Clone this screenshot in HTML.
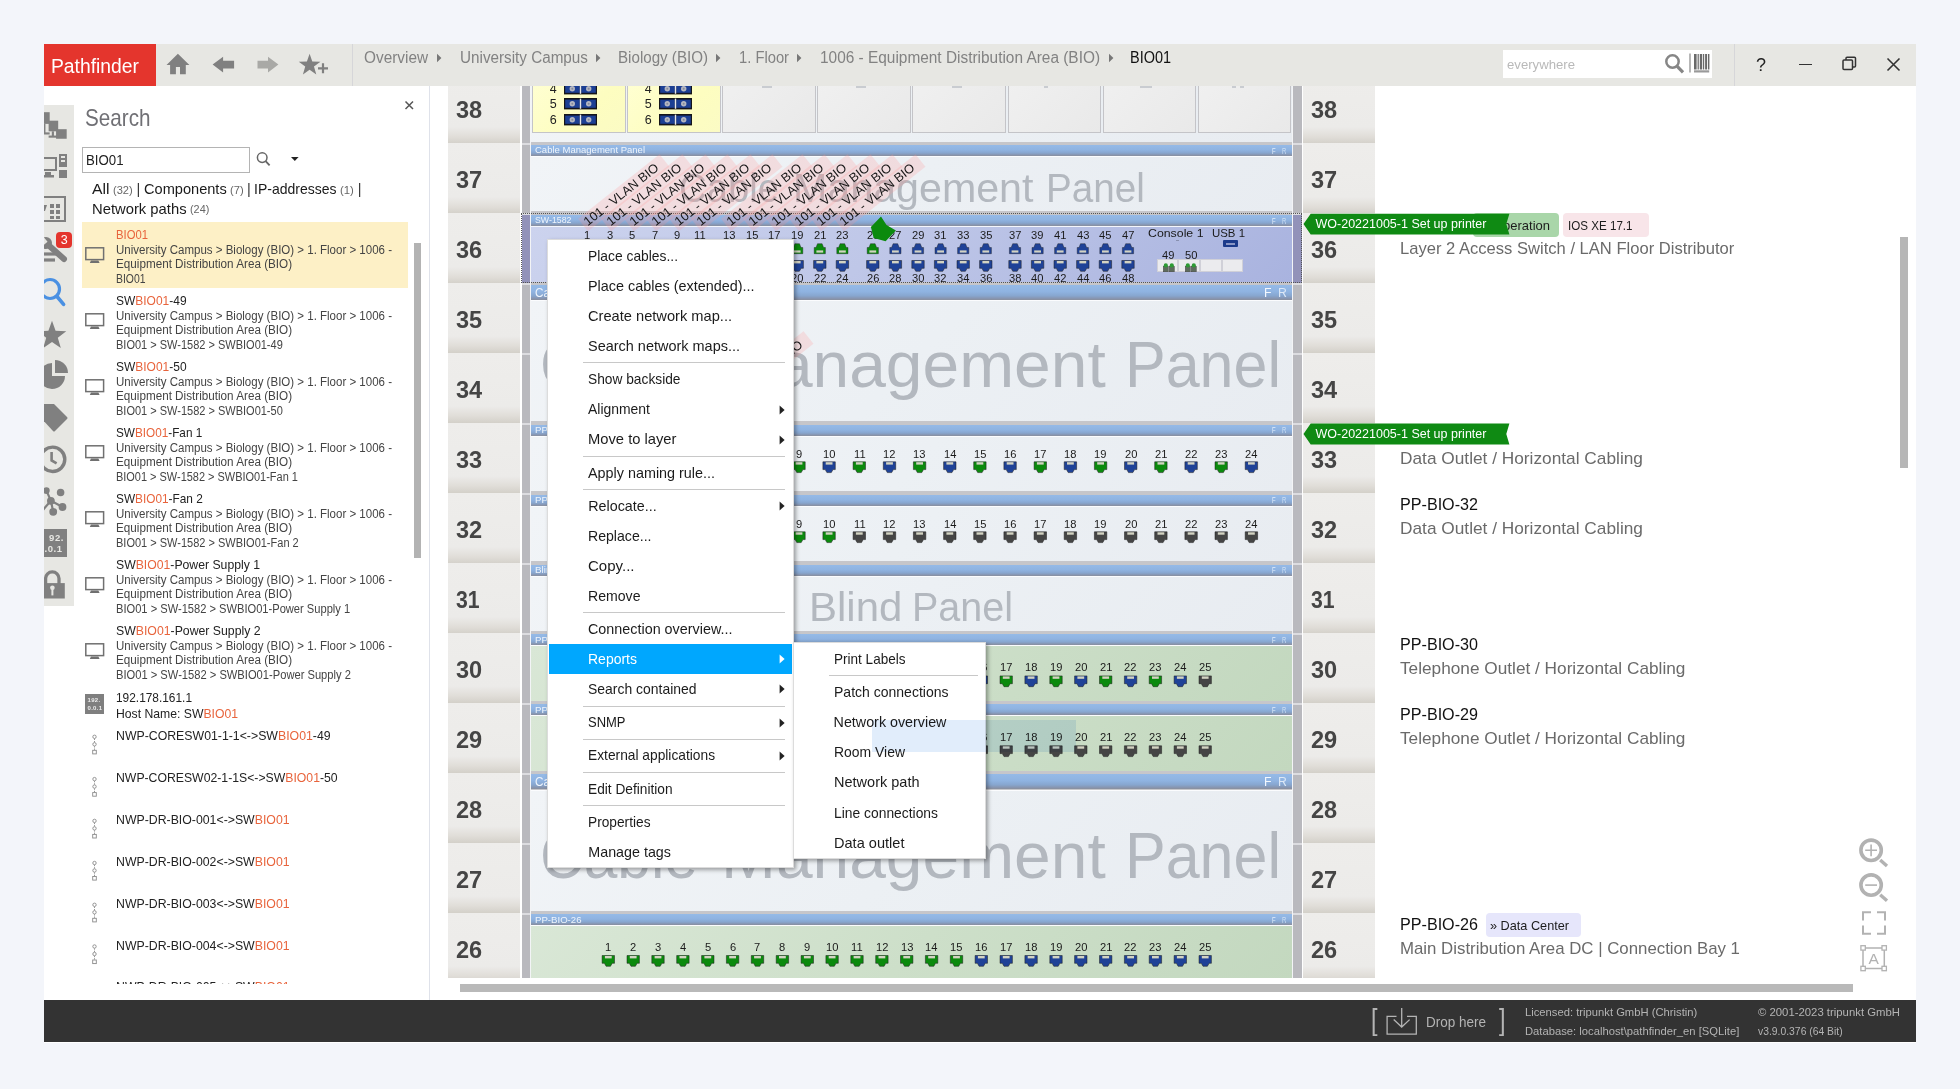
<!DOCTYPE html>
<html lang="en"><head><meta charset="utf-8"><title>Pathfinder - BIO01</title>
<style>
html,body{margin:0;padding:0}
html{background:#f3f5fa}
body{width:1960px;height:1089px;background:#f3f5fa;overflow:hidden;position:relative;font-family:"Liberation Sans","DejaVu Sans",sans-serif;color:#222}
#win{position:absolute;left:44px;top:44px;width:1872px;height:999px;background:#fff;overflow:hidden}
#w{position:absolute;left:-44px;top:-44px;width:1960px;height:1089px}
.a{position:absolute}
.t{position:absolute;white-space:nowrap;line-height:1}
svg{position:absolute;overflow:visible}
.o{color:#e8643c}
</style></head><body><div id="win"><div id="w">

<div class="a" style="left:44.0px;top:44.0px;width:1872.0px;height:42.0px;background:#e7e7e3;"></div>
<div class="a" style="left:44.0px;top:44.0px;width:112.0px;height:42.0px;background:#e4352d;"></div>
<div class="t" style="left:51.0px;top:55.5px;font-size:20px;color:#fff;transform-origin:0 50%;transform:scaleX(0.965);">Pathfinder</div>
<svg style="left:160.0px;top:48.0px;" width="36" height="32" viewBox="0 0 36 32"><path fill="#808080" d="M17.9 5.7 L29.4 17 L25.8 17 L25.8 26.3 L20 26.3 L20 19 L15.9 19 L15.9 26.3 L10.1 26.3 L10.1 17 L6.5 17 Z"/></svg>
<svg style="left:205.0px;top:48.0px;" width="36" height="32" viewBox="0 0 36 32"><path fill="#808080" d="M7.6 16.4 L18.1 8.8 L18.1 12.8 L29.1 12.8 L29.1 20.5 L18.1 20.5 L18.1 24.4 Z"/></svg>
<svg style="left:250.0px;top:48.0px;" width="36" height="32" viewBox="0 0 36 32"><path fill="#a9a9a6" d="M28.4 16.4 L18 8.8 L18 12.8 L7.5 12.8 L7.5 20.5 L18 20.5 L18 24.4 Z"/></svg>
<svg style="left:294.0px;top:48.0px;" width="40" height="32" viewBox="0 0 40 32"><polygon fill="#808080" points="15.60,5.80 18.30,13.48 26.44,13.68 19.97,18.62 22.30,26.42 15.60,21.80 8.90,26.42 11.23,18.62 4.76,13.68 12.90,13.48"/><path stroke="#808080" stroke-width="2.2" d="M24 20.3 H34 M29 15.3 V25.3" fill="none"/></svg>
<div class="a" style="left:352.0px;top:44.0px;width:1.0px;height:42.0px;background:#d6d6d9;"></div>
<div class="t" style="left:364.0px;top:49.5px;font-size:16px;color:#828282;transform-origin:0 50%;transform:scaleX(0.960);">Overview</div>
<div class="t" style="left:459.5px;top:49.5px;font-size:16px;color:#828282;transform-origin:0 50%;transform:scaleX(0.953);">University Campus</div>
<div class="t" style="left:618.0px;top:49.5px;font-size:16px;color:#828282;transform-origin:0 50%;transform:scaleX(0.946);">Biology (BIO)</div>
<div class="t" style="left:738.5px;top:49.5px;font-size:16px;color:#828282;transform-origin:0 50%;transform:scaleX(0.922);">1. Floor</div>
<div class="t" style="left:819.5px;top:49.5px;font-size:16px;color:#828282;transform-origin:0 50%;transform:scaleX(0.963);">1006 - Equipment Distribution Area (BIO)</div>
<div class="t" style="left:1130.0px;top:49.5px;font-size:16px;color:#111;transform-origin:0 50%;transform:scaleX(0.904);">BIO01</div>
<svg style="left:435.8px;top:52.0px;" width="8" height="12" viewBox="0 0 8 12"><path fill="#777" d="M1 1.8 L5.4 6 L1 10.2 Z"/></svg>
<svg style="left:595.3px;top:52.0px;" width="8" height="12" viewBox="0 0 8 12"><path fill="#777" d="M1 1.8 L5.4 6 L1 10.2 Z"/></svg>
<svg style="left:715.3px;top:52.0px;" width="8" height="12" viewBox="0 0 8 12"><path fill="#777" d="M1 1.8 L5.4 6 L1 10.2 Z"/></svg>
<svg style="left:795.8px;top:52.0px;" width="8" height="12" viewBox="0 0 8 12"><path fill="#777" d="M1 1.8 L5.4 6 L1 10.2 Z"/></svg>
<svg style="left:1107.8px;top:52.0px;" width="8" height="12" viewBox="0 0 8 12"><path fill="#777" d="M1 1.8 L5.4 6 L1 10.2 Z"/></svg>
<div class="a" style="left:1503.0px;top:50.0px;width:209.0px;height:28.0px;background:#fff;"></div>
<div class="t" style="left:1507.0px;top:58.0px;font-size:13px;color:#b9b9b9;transform-origin:0 50%;transform:scaleX(1.012);">everywhere</div>
<svg style="left:1664.0px;top:52.0px;" width="24" height="24" viewBox="0 0 24 24"><circle cx="8.5" cy="9.5" r="6.2" fill="none" stroke="#868686" stroke-width="2.5"/><path d="M13 14.2 L19 20.4" stroke="#868686" stroke-width="3.2" fill="none"/></svg>
<svg style="left:1689.0px;top:52.0px;" width="22" height="24" viewBox="0 0 22 24"><path d="M1 1.5 V20.5" stroke="#888" stroke-width="1.2" fill="none"/><rect x="5" y="2" width="2.6" height="15.5" fill="#6a6a6a"/><rect x="8.6" y="2" width="1.2" height="15.5" fill="#6a6a6a"/><rect x="10.8" y="2" width="2.4" height="15.5" fill="#6a6a6a"/><rect x="14" y="2" width="1.2" height="15.5" fill="#6a6a6a"/><rect x="16.1" y="2" width="2" height="15.5" fill="#6a6a6a"/><rect x="19" y="2" width="1.4" height="15.5" fill="#6a6a6a"/><rect x="5" y="18.3" width="15.2" height="2.2" fill="#999"/></svg>
<div class="a" style="left:1734.0px;top:44.0px;width:1.0px;height:42.0px;background:#d6d6d9;"></div>
<div class="t" style="left:1756.0px;top:55.5px;font-size:18px;color:#222;transform-origin:0 50%;">?</div>
<div class="a" style="left:1799.0px;top:63.5px;width:13.0px;height:1.5px;background:#333;"></div>
<svg style="left:1842.0px;top:56.0px;" width="16" height="16" viewBox="0 0 16 16"><rect x="1" y="4" width="9.5" height="9.5" rx="1" fill="none" stroke="#333" stroke-width="1.5"/><path d="M4 4 V2.3 a1 1 0 0 1 1 -1 H12.5 a1 1 0 0 1 1 1 V10 a1 1 0 0 1 -1 1 H10.5" fill="none" stroke="#333" stroke-width="1.5"/></svg>
<svg style="left:1886.0px;top:57.0px;" width="16" height="16" viewBox="0 0 16 16"><path d="M1.5 1.5 L13.5 13.5 M13.5 1.5 L1.5 13.5" stroke="#333" stroke-width="1.6" fill="none"/></svg>
<div class="a" style="left:44.0px;top:105.0px;width:29.5px;height:501.0px;background:#e7e7e3;"></div>
<div class="a" style="left:428.8px;top:86.0px;width:1.2px;height:914.0px;background:#dfe2ea;"></div>
<svg style="left:37.5px;top:108.5px;" width="34" height="34" viewBox="0 0 32 32"><g fill="#808080"><rect x="2" y="3" width="9" height="11"/><rect x="10" y="11" width="9" height="10"/><rect x="17" y="19" width="10" height="9"/><rect x="5" y="14" width="2" height="9"/><rect x="2" y="22" width="9" height="2"/><rect x="13" y="21" width="2" height="5"/><rect x="10" y="25" width="8" height="2"/></g></svg>
<svg style="left:37.7px;top:151.0px;" width="32" height="32" viewBox="0 0 32 32"><g fill="#808080"><path d="M2 6 H19 V20 H2 Z M4 8 V18 H17 V8 Z" fill-rule="evenodd"/><rect x="7" y="21" width="6" height="3"/><rect x="4" y="24" width="12" height="2.5"/><path d="M21 3 H29 V16 H21 Z M23 5 V7 H27 V5 Z M23 9 V11 H27 V9 Z" fill-rule="evenodd"/><rect x="21" y="19" width="8" height="8"/></g></svg>
<svg style="left:37.0px;top:193.0px;" width="32" height="32" viewBox="0 0 32 32"><g fill="#808080"><path d="M1 3 H29 V29 H1 Z M3 5 V27 H27 V5 Z" fill-rule="evenodd"/><rect x="13" y="11" width="4" height="4"/><rect x="19" y="11" width="4" height="4"/><rect x="13" y="17" width="4" height="4"/><rect x="19" y="17" width="4" height="4"/><rect x="13" y="23" width="4" height="3"/><rect x="19" y="23" width="4" height="3"/><path d="M5 12 H10 L8 18 H6 Z"/></g></svg>
<svg style="left:36.5px;top:237.0px;" width="36" height="36" viewBox="0 0 36 36"><g fill="none" stroke="#808080"><path d="M8 5 L27 22" stroke-width="6" stroke-linecap="round"/><path d="M4 17 H20" stroke-width="3.2"/><path d="M4 23 H18" stroke-width="3.2"/></g><circle cx="9" cy="6" r="6" fill="#808080"/><rect x="5" y="-2" width="6" height="8" fill="#e7e7e3" transform="rotate(-40 9 6)"/></svg>
<div class="a" style="left:56.0px;top:232.0px;width:16.4px;height:16.4px;background:#e4352d;border-radius:4px;"></div>
<div class="t" style="left:60.7px;top:234.0px;font-size:12.5px;color:#fff;transform-origin:0 50%;">3</div>
<svg style="left:38.0px;top:276.5px;" width="36" height="36" viewBox="0 0 36 36"><circle cx="12" cy="12" r="9.5" fill="none" stroke="#4a90e2" stroke-width="3.2"/><path d="M19 19.5 L25.6 27.4" stroke="#4a90e2" stroke-width="3.6" stroke-linecap="round" fill="none"/></svg>
<svg style="left:36.0px;top:318.0px;" width="36" height="36" viewBox="0 0 36 36"><polygon fill="#808080" points="16.00,2.80 19.59,12.86 30.27,13.16 21.80,19.69 24.82,29.94 16.00,23.90 7.18,29.94 10.20,19.69 1.73,13.16 12.41,12.86"/></svg>
<svg style="left:38.6px;top:359.0px;" width="36" height="36" viewBox="0 0 36 36"><path fill="#808080" d="M13 4 A13 13 0 1 0 26 17 H13 Z"/><path fill="#808080" d="M16 1 A13 13 0 0 1 29 14 H16 Z"/></svg>
<svg style="left:37.0px;top:400.5px;" width="36" height="36" viewBox="0 0 36 36"><path fill="#808080" d="M4 6 Q4 3 7 3 H17 L30 16 Q31 17 30 18 L18 30 Q17 31 16 30 L4 17 Z"/></svg>
<svg style="left:36.0px;top:444.0px;" width="36" height="36" viewBox="0 0 36 36"><circle cx="16.6" cy="15.3" r="12.2" fill="none" stroke="#808080" stroke-width="3.4"/><path d="M15.6 8 V16.4 L20.6 19.4" fill="none" stroke="#808080" stroke-width="2.6"/></svg>
<svg style="left:0;top:0" width="100" height="700"><g stroke="#808080" stroke-width="2.2" fill="#808080"><path d="M46.4 490.6 L50.9 500.8 L62.5 507 M50.9 500.8 L53.2 511.8 M50.9 500.8 L42 511" fill="none"/><circle cx="46.4" cy="490.6" r="2.2"/><circle cx="60.6" cy="492.5" r="2.7"/><circle cx="50.9" cy="500.8" r="2.8"/><circle cx="62.5" cy="507" r="2.8"/><circle cx="53.2" cy="511.8" r="2.8"/></g></svg>
<div class="a" style="left:40.0px;top:528.5px;width:27.0px;height:28.5px;background:#808080;"></div>
<div class="t" style="left:49.0px;top:533.4px;font-size:9.5px;color:#e7e7e3;font-weight:bold;transform-origin:0 50%;letter-spacing:.6px;">92.</div>
<div class="t" style="left:44.5px;top:544.4px;font-size:9.5px;color:#e7e7e3;font-weight:bold;transform-origin:0 50%;letter-spacing:.6px;">.0.1</div>
<svg style="left:0;top:0" width="100" height="700"><path d="M45.6 584 V578.6 a6.7 6.7 0 0 1 13.4 0 V584" fill="none" stroke="#808080" stroke-width="3.3"/><rect x="40" y="583.1" width="24.8" height="15.4" fill="#808080"/><circle cx="52.4" cy="587.8" r="2.3" fill="#e7e7e3"/><rect x="51.4" y="588" width="2" height="7.4" fill="#e7e7e3"/></svg>
<div class="t" style="left:85.2px;top:106.9px;font-size:23.6px;color:#707075;transform-origin:0 50%;transform:scaleX(0.876);">Search</div>
<svg style="left:404.0px;top:100.0px;" width="12" height="12" viewBox="0 0 12 12"><path d="M1.5 1.5 L9 9 M9 1.5 L1.5 9" stroke="#555" stroke-width="1.5" fill="none"/></svg>
<div class="a" style="left:82.0px;top:146.5px;width:167.5px;height:26.0px;background:#fff;border:1px solid #b4b4b4;box-sizing:border-box;"></div>
<div class="t" style="left:85.5px;top:152.3px;font-size:15px;color:#222;transform-origin:0 50%;transform:scaleX(0.882);">BIO01</div>
<svg style="left:255.0px;top:150.0px;" width="20" height="20" viewBox="0 0 20 20"><circle cx="7.2" cy="7.6" r="4.8" fill="none" stroke="#666" stroke-width="1.5"/><path d="M10.6 11.2 L14.6 15.4" stroke="#666" stroke-width="1.8" fill="none"/></svg>
<svg style="left:290.0px;top:156.0px;" width="10" height="6" viewBox="0 0 10 6"><path d="M1 1 H8.6 L4.8 5 Z" fill="#222"/></svg>
<div class="t" style="left:91.7px;top:182.2px;font-size:14.5px;color:#1a1a1a;transform-origin:0 50%;transform:scaleX(1.086);">All</div>
<div class="t" style="left:113.2px;top:184.5px;font-size:11.5px;color:#666;transform-origin:0 50%;transform:scaleX(0.963);">(32)</div>
<div class="t" style="left:136.4px;top:182.2px;font-size:14.5px;color:#333;transform-origin:0 50%;">|</div>
<div class="t" style="left:143.5px;top:182.2px;font-size:14.5px;color:#1a1a1a;transform-origin:0 50%;transform:scaleX(1.006);">Components</div>
<div class="t" style="left:230.3px;top:184.5px;font-size:11.5px;color:#666;transform-origin:0 50%;transform:scaleX(0.975);">(7)</div>
<div class="t" style="left:247.0px;top:182.2px;font-size:14.5px;color:#333;transform-origin:0 50%;">|</div>
<div class="t" style="left:254.0px;top:182.2px;font-size:14.5px;color:#1a1a1a;transform-origin:0 50%;transform:scaleX(0.965);">IP-addresses</div>
<div class="t" style="left:340.0px;top:184.5px;font-size:11.5px;color:#666;transform-origin:0 50%;transform:scaleX(0.989);">(1)</div>
<div class="t" style="left:357.7px;top:182.2px;font-size:14.5px;color:#333;transform-origin:0 50%;">|</div>
<div class="t" style="left:91.7px;top:201.5px;font-size:14.5px;color:#1a1a1a;transform-origin:0 50%;transform:scaleX(1.020);">Network paths</div>
<div class="t" style="left:189.8px;top:203.8px;font-size:11.5px;color:#666;transform-origin:0 50%;transform:scaleX(0.944);">(24)</div>
<div class="a" style="left:82.0px;top:222.3px;width:325.6px;height:65.9px;background:#fdf0c6;"></div>
<svg style="left:85.2px;top:247.1px;" width="20" height="17" viewBox="0 0 20 17"><rect x="0.8" y="0.8" width="17.8" height="11.8" fill="none" stroke="#707070" stroke-width="1.5"/><path d="M6 13.6 H13.4 L14.6 16 H4.8 Z" fill="#707070"/></svg>
<div class="t" style="left:116.4px;top:227.8px;font-size:13px;color:#222;transform-origin:0 50%;transform:scaleX(0.868);"><span class="o">BIO01</span></div>
<div class="t" style="left:116.4px;top:243.5px;font-size:12px;color:#444;transform-origin:0 50%;transform:scaleX(0.959);">University Campus &gt; Biology (BIO) &gt; 1. Floor &gt; 1006 -</div>
<div class="t" style="left:116.4px;top:258.1px;font-size:12px;color:#444;transform-origin:0 50%;transform:scaleX(0.974);">Equipment Distribution Area (BIO)</div>
<div class="t" style="left:116.4px;top:272.6px;font-size:12px;color:#444;transform-origin:0 50%;transform:scaleX(0.867);">BIO01</div>
<svg style="left:85.2px;top:313.1px;" width="20" height="17" viewBox="0 0 20 17"><rect x="0.8" y="0.8" width="17.8" height="11.8" fill="none" stroke="#707070" stroke-width="1.5"/><path d="M6 13.6 H13.4 L14.6 16 H4.8 Z" fill="#707070"/></svg>
<div class="t" style="left:116.4px;top:293.8px;font-size:13px;color:#222;transform-origin:0 50%;transform:scaleX(0.921);">SW<span class="o">BIO01</span>-49</div>
<div class="t" style="left:116.4px;top:309.5px;font-size:12px;color:#444;transform-origin:0 50%;transform:scaleX(0.959);">University Campus &gt; Biology (BIO) &gt; 1. Floor &gt; 1006 -</div>
<div class="t" style="left:116.4px;top:324.1px;font-size:12px;color:#444;transform-origin:0 50%;transform:scaleX(0.974);">Equipment Distribution Area (BIO)</div>
<div class="t" style="left:116.4px;top:338.6px;font-size:12px;color:#444;transform-origin:0 50%;transform:scaleX(0.917);">BIO01 &gt; SW-1582 &gt; SWBIO01-49</div>
<svg style="left:85.2px;top:379.1px;" width="20" height="17" viewBox="0 0 20 17"><rect x="0.8" y="0.8" width="17.8" height="11.8" fill="none" stroke="#707070" stroke-width="1.5"/><path d="M6 13.6 H13.4 L14.6 16 H4.8 Z" fill="#707070"/></svg>
<div class="t" style="left:116.4px;top:359.8px;font-size:13px;color:#222;transform-origin:0 50%;transform:scaleX(0.921);">SW<span class="o">BIO01</span>-50</div>
<div class="t" style="left:116.4px;top:375.5px;font-size:12px;color:#444;transform-origin:0 50%;transform:scaleX(0.959);">University Campus &gt; Biology (BIO) &gt; 1. Floor &gt; 1006 -</div>
<div class="t" style="left:116.4px;top:390.1px;font-size:12px;color:#444;transform-origin:0 50%;transform:scaleX(0.974);">Equipment Distribution Area (BIO)</div>
<div class="t" style="left:116.4px;top:404.6px;font-size:12px;color:#444;transform-origin:0 50%;transform:scaleX(0.917);">BIO01 &gt; SW-1582 &gt; SWBIO01-50</div>
<svg style="left:85.2px;top:445.1px;" width="20" height="17" viewBox="0 0 20 17"><rect x="0.8" y="0.8" width="17.8" height="11.8" fill="none" stroke="#707070" stroke-width="1.5"/><path d="M6 13.6 H13.4 L14.6 16 H4.8 Z" fill="#707070"/></svg>
<div class="t" style="left:116.4px;top:425.8px;font-size:13px;color:#222;transform-origin:0 50%;transform:scaleX(0.904);">SW<span class="o">BIO01</span>-Fan 1</div>
<div class="t" style="left:116.4px;top:441.5px;font-size:12px;color:#444;transform-origin:0 50%;transform:scaleX(0.959);">University Campus &gt; Biology (BIO) &gt; 1. Floor &gt; 1006 -</div>
<div class="t" style="left:116.4px;top:456.1px;font-size:12px;color:#444;transform-origin:0 50%;transform:scaleX(0.974);">Equipment Distribution Area (BIO)</div>
<div class="t" style="left:116.4px;top:470.6px;font-size:12px;color:#444;transform-origin:0 50%;transform:scaleX(0.913);">BIO01 &gt; SW-1582 &gt; SWBIO01-Fan 1</div>
<svg style="left:85.2px;top:511.1px;" width="20" height="17" viewBox="0 0 20 17"><rect x="0.8" y="0.8" width="17.8" height="11.8" fill="none" stroke="#707070" stroke-width="1.5"/><path d="M6 13.6 H13.4 L14.6 16 H4.8 Z" fill="#707070"/></svg>
<div class="t" style="left:116.4px;top:491.8px;font-size:13px;color:#222;transform-origin:0 50%;transform:scaleX(0.910);">SW<span class="o">BIO01</span>-Fan 2</div>
<div class="t" style="left:116.4px;top:507.5px;font-size:12px;color:#444;transform-origin:0 50%;transform:scaleX(0.959);">University Campus &gt; Biology (BIO) &gt; 1. Floor &gt; 1006 -</div>
<div class="t" style="left:116.4px;top:522.1px;font-size:12px;color:#444;transform-origin:0 50%;transform:scaleX(0.974);">Equipment Distribution Area (BIO)</div>
<div class="t" style="left:116.4px;top:536.6px;font-size:12px;color:#444;transform-origin:0 50%;transform:scaleX(0.917);">BIO01 &gt; SW-1582 &gt; SWBIO01-Fan 2</div>
<svg style="left:85.2px;top:577.1px;" width="20" height="17" viewBox="0 0 20 17"><rect x="0.8" y="0.8" width="17.8" height="11.8" fill="none" stroke="#707070" stroke-width="1.5"/><path d="M6 13.6 H13.4 L14.6 16 H4.8 Z" fill="#707070"/></svg>
<div class="t" style="left:116.4px;top:557.8px;font-size:13px;color:#222;transform-origin:0 50%;transform:scaleX(0.940);">SW<span class="o">BIO01</span>-Power Supply 1</div>
<div class="t" style="left:116.4px;top:573.5px;font-size:12px;color:#444;transform-origin:0 50%;transform:scaleX(0.959);">University Campus &gt; Biology (BIO) &gt; 1. Floor &gt; 1006 -</div>
<div class="t" style="left:116.4px;top:588.1px;font-size:12px;color:#444;transform-origin:0 50%;transform:scaleX(0.974);">Equipment Distribution Area (BIO)</div>
<div class="t" style="left:116.4px;top:602.6px;font-size:12px;color:#444;transform-origin:0 50%;transform:scaleX(0.927);">BIO01 &gt; SW-1582 &gt; SWBIO01-Power Supply 1</div>
<svg style="left:85.2px;top:643.1px;" width="20" height="17" viewBox="0 0 20 17"><rect x="0.8" y="0.8" width="17.8" height="11.8" fill="none" stroke="#707070" stroke-width="1.5"/><path d="M6 13.6 H13.4 L14.6 16 H4.8 Z" fill="#707070"/></svg>
<div class="t" style="left:116.4px;top:623.8px;font-size:13px;color:#222;transform-origin:0 50%;transform:scaleX(0.944);">SW<span class="o">BIO01</span>-Power Supply 2</div>
<div class="t" style="left:116.4px;top:639.5px;font-size:12px;color:#444;transform-origin:0 50%;transform:scaleX(0.959);">University Campus &gt; Biology (BIO) &gt; 1. Floor &gt; 1006 -</div>
<div class="t" style="left:116.4px;top:654.1px;font-size:12px;color:#444;transform-origin:0 50%;transform:scaleX(0.974);">Equipment Distribution Area (BIO)</div>
<div class="t" style="left:116.4px;top:668.6px;font-size:12px;color:#444;transform-origin:0 50%;transform:scaleX(0.930);">BIO01 &gt; SW-1582 &gt; SWBIO01-Power Supply 2</div>
<div class="a" style="left:84.8px;top:694.4px;width:19.6px;height:19.6px;background:#7f7f7f;"></div>
<div class="t" style="left:87.5px;top:697.2px;font-size:6px;color:#eee;font-weight:bold;transform-origin:0 50%;letter-spacing:.3px;">192.</div>
<div class="t" style="left:87.5px;top:704.8px;font-size:6px;color:#eee;font-weight:bold;transform-origin:0 50%;letter-spacing:.3px;">0.0.1</div>
<div class="t" style="left:116.4px;top:690.8px;font-size:13px;color:#222;transform-origin:0 50%;transform:scaleX(0.914);">192.178.161.1</div>
<div class="t" style="left:116.4px;top:706.7px;font-size:13px;color:#222;transform-origin:0 50%;transform:scaleX(0.938);">Host Name: SW<span class="o">BIO01</span></div>
<div class="a" style="left:76px;top:700px;width:350px;height:283.8px;overflow:hidden"><div class="a" style="left:-76px;top:-700px;width:500px;height:1089px">
<svg style="left:0;top:0" width="500" height="1089"><circle cx="94.5" cy="736.8" r="1.7" fill="#fff" stroke="#8a8a8a" stroke-width="0.9"/><circle cx="94.5" cy="744.3" r="1.7" fill="#fff" stroke="#8a8a8a" stroke-width="0.9"/><rect x="92.7" y="750.3" width="3.6" height="3.6" fill="#fff" stroke="#8a8a8a" stroke-width="0.9"/><path d="M94.5 738.7 V742.4 M94.5 746.2 V750.3" stroke="#8a8a8a" stroke-width="0.9" stroke-dasharray="1.3 1"/></svg>
<div class="t" style="left:116.4px;top:728.8px;font-size:13px;color:#222;transform-origin:0 50%;transform:scaleX(0.946);">NWP-CORESW01-1-1&lt;-&gt;SW<span class="o">BIO01</span>-49</div>
<svg style="left:0;top:0" width="500" height="1089"><circle cx="94.5" cy="779.1" r="1.7" fill="#fff" stroke="#8a8a8a" stroke-width="0.9"/><circle cx="94.5" cy="786.6" r="1.7" fill="#fff" stroke="#8a8a8a" stroke-width="0.9"/><rect x="92.7" y="792.6" width="3.6" height="3.6" fill="#fff" stroke="#8a8a8a" stroke-width="0.9"/><path d="M94.5 781.0 V784.7 M94.5 788.5 V792.6" stroke="#8a8a8a" stroke-width="0.9" stroke-dasharray="1.3 1"/></svg>
<div class="t" style="left:116.4px;top:771.1px;font-size:13px;color:#222;transform-origin:0 50%;transform:scaleX(0.941);">NWP-CORESW02-1-1S&lt;-&gt;SW<span class="o">BIO01</span>-50</div>
<svg style="left:0;top:0" width="500" height="1089"><circle cx="94.5" cy="820.9" r="1.7" fill="#fff" stroke="#8a8a8a" stroke-width="0.9"/><circle cx="94.5" cy="828.4" r="1.7" fill="#fff" stroke="#8a8a8a" stroke-width="0.9"/><rect x="92.7" y="834.4" width="3.6" height="3.6" fill="#fff" stroke="#8a8a8a" stroke-width="0.9"/><path d="M94.5 822.8 V826.5 M94.5 830.3 V834.4" stroke="#8a8a8a" stroke-width="0.9" stroke-dasharray="1.3 1"/></svg>
<div class="t" style="left:116.4px;top:812.9px;font-size:13px;color:#222;transform-origin:0 50%;transform:scaleX(0.946);">NWP-DR-BIO-001&lt;-&gt;SW<span class="o">BIO01</span></div>
<svg style="left:0;top:0" width="500" height="1089"><circle cx="94.5" cy="863.0" r="1.7" fill="#fff" stroke="#8a8a8a" stroke-width="0.9"/><circle cx="94.5" cy="870.5" r="1.7" fill="#fff" stroke="#8a8a8a" stroke-width="0.9"/><rect x="92.7" y="876.5" width="3.6" height="3.6" fill="#fff" stroke="#8a8a8a" stroke-width="0.9"/><path d="M94.5 864.9 V868.6 M94.5 872.4 V876.5" stroke="#8a8a8a" stroke-width="0.9" stroke-dasharray="1.3 1"/></svg>
<div class="t" style="left:116.4px;top:855.0px;font-size:13px;color:#222;transform-origin:0 50%;transform:scaleX(0.946);">NWP-DR-BIO-002&lt;-&gt;SW<span class="o">BIO01</span></div>
<svg style="left:0;top:0" width="500" height="1089"><circle cx="94.5" cy="904.8" r="1.7" fill="#fff" stroke="#8a8a8a" stroke-width="0.9"/><circle cx="94.5" cy="912.3" r="1.7" fill="#fff" stroke="#8a8a8a" stroke-width="0.9"/><rect x="92.7" y="918.3" width="3.6" height="3.6" fill="#fff" stroke="#8a8a8a" stroke-width="0.9"/><path d="M94.5 906.7 V910.4 M94.5 914.2 V918.3" stroke="#8a8a8a" stroke-width="0.9" stroke-dasharray="1.3 1"/></svg>
<div class="t" style="left:116.4px;top:896.8px;font-size:13px;color:#222;transform-origin:0 50%;transform:scaleX(0.946);">NWP-DR-BIO-003&lt;-&gt;SW<span class="o">BIO01</span></div>
<svg style="left:0;top:0" width="500" height="1089"><circle cx="94.5" cy="946.5" r="1.7" fill="#fff" stroke="#8a8a8a" stroke-width="0.9"/><circle cx="94.5" cy="954.0" r="1.7" fill="#fff" stroke="#8a8a8a" stroke-width="0.9"/><rect x="92.7" y="960.0" width="3.6" height="3.6" fill="#fff" stroke="#8a8a8a" stroke-width="0.9"/><path d="M94.5 948.4 V952.1 M94.5 955.9 V960.0" stroke="#8a8a8a" stroke-width="0.9" stroke-dasharray="1.3 1"/></svg>
<div class="t" style="left:116.4px;top:938.5px;font-size:13px;color:#222;transform-origin:0 50%;transform:scaleX(0.946);">NWP-DR-BIO-004&lt;-&gt;SW<span class="o">BIO01</span></div>
<svg style="left:0;top:0" width="500" height="1089"><circle cx="94.5" cy="988.1" r="1.7" fill="#fff" stroke="#8a8a8a" stroke-width="0.9"/><circle cx="94.5" cy="995.6" r="1.7" fill="#fff" stroke="#8a8a8a" stroke-width="0.9"/><rect x="92.7" y="1001.6" width="3.6" height="3.6" fill="#fff" stroke="#8a8a8a" stroke-width="0.9"/><path d="M94.5 990.0 V993.7 M94.5 997.5 V1001.6" stroke="#8a8a8a" stroke-width="0.9" stroke-dasharray="1.3 1"/></svg>
<div class="t" style="left:116.4px;top:980.1px;font-size:13px;color:#222;transform-origin:0 50%;transform:scaleX(0.946);">NWP-DR-BIO-005&lt;-&gt;SW<span class="o">BIO01</span></div>
</div></div>
<div class="a" style="left:414.0px;top:243.0px;width:7.3px;height:315.0px;background:#b3b3b3;"></div>
<div class="a" style="left:440px;top:86px;width:940px;height:891.5px;overflow:hidden"><div class="a" style="left:-440px;top:-86px;width:1960px;height:1089px">
<div class="a" style="left:531.0px;top:86.0px;width:761.2px;height:899.0px;background:#c6c6ca;"></div>
<div class="a" style="left:521.8px;top:86.0px;width:8.1px;height:899.0px;background:#dcdce0;"></div>
<div class="a" style="left:1293.3px;top:86.0px;width:8.4px;height:899.0px;background:#dcdce0;"></div>
<div class="a" style="left:529.9px;top:86.0px;width:1.1px;height:899.0px;background:#f3f4f6;"></div>
<div class="a" style="left:1292.2px;top:86.0px;width:1.1px;height:899.0px;background:#f3f4f6;"></div>
<div class="a" style="left:448.0px;top:73.3px;width:72.0px;height:70.5px;background:linear-gradient(to bottom,#eeedeb 0%,#ecebe9 76%,#e0ddd8 90%,#d3d0c9 100%);"></div>
<div class="t" style="left:456.4px;top:98.3px;font-size:23.8px;color:#454545;font-weight:bold;transform-origin:0 50%;transform:scaleX(0.990);">38</div>
<div class="a" style="left:1303.0px;top:73.3px;width:72.0px;height:70.5px;background:linear-gradient(to bottom,#eeedeb 0%,#ecebe9 76%,#e0ddd8 90%,#d3d0c9 100%);"></div>
<div class="t" style="left:1311.4px;top:98.3px;font-size:23.8px;color:#454545;font-weight:bold;transform-origin:0 50%;transform:scaleX(0.990);">38</div>
<div class="a" style="left:521.8px;top:75.1px;width:8.1px;height:68.3px;background:#b9b9be;"></div>
<div class="a" style="left:1293.3px;top:75.1px;width:8.4px;height:68.3px;background:#b9b9be;"></div>
<div class="a" style="left:448.0px;top:143.2px;width:72.0px;height:70.4px;background:linear-gradient(to bottom,#eeedeb 0%,#ecebe9 76%,#e0ddd8 90%,#d3d0c9 100%);"></div>
<div class="t" style="left:456.4px;top:168.3px;font-size:23.8px;color:#454545;font-weight:bold;transform-origin:0 50%;transform:scaleX(0.990);">37</div>
<div class="a" style="left:1303.0px;top:143.2px;width:72.0px;height:70.4px;background:linear-gradient(to bottom,#eeedeb 0%,#ecebe9 76%,#e0ddd8 90%,#d3d0c9 100%);"></div>
<div class="t" style="left:1311.4px;top:168.3px;font-size:23.8px;color:#454545;font-weight:bold;transform-origin:0 50%;transform:scaleX(0.990);">37</div>
<div class="a" style="left:521.8px;top:145.1px;width:8.1px;height:68.3px;background:#b9b9be;"></div>
<div class="a" style="left:1293.3px;top:145.1px;width:8.4px;height:68.3px;background:#b9b9be;"></div>
<div class="a" style="left:448.0px;top:213.2px;width:72.0px;height:70.4px;background:linear-gradient(to bottom,#eeedeb 0%,#ecebe9 76%,#e0ddd8 90%,#d3d0c9 100%);"></div>
<div class="t" style="left:456.4px;top:238.2px;font-size:23.8px;color:#454545;font-weight:bold;transform-origin:0 50%;transform:scaleX(0.990);">36</div>
<div class="a" style="left:1303.0px;top:213.2px;width:72.0px;height:70.4px;background:linear-gradient(to bottom,#eeedeb 0%,#ecebe9 76%,#e0ddd8 90%,#d3d0c9 100%);"></div>
<div class="t" style="left:1311.4px;top:238.2px;font-size:23.8px;color:#454545;font-weight:bold;transform-origin:0 50%;transform:scaleX(0.990);">36</div>
<div class="a" style="left:521.8px;top:215.0px;width:8.1px;height:68.3px;background:#9292b9;"></div>
<div class="a" style="left:1293.3px;top:215.0px;width:8.4px;height:68.3px;background:#9292b9;"></div>
<div class="a" style="left:448.0px;top:283.1px;width:72.0px;height:70.4px;background:linear-gradient(to bottom,#eeedeb 0%,#ecebe9 76%,#e0ddd8 90%,#d3d0c9 100%);"></div>
<div class="t" style="left:456.4px;top:308.2px;font-size:23.8px;color:#454545;font-weight:bold;transform-origin:0 50%;transform:scaleX(0.990);">35</div>
<div class="a" style="left:1303.0px;top:283.1px;width:72.0px;height:70.4px;background:linear-gradient(to bottom,#eeedeb 0%,#ecebe9 76%,#e0ddd8 90%,#d3d0c9 100%);"></div>
<div class="t" style="left:1311.4px;top:308.2px;font-size:23.8px;color:#454545;font-weight:bold;transform-origin:0 50%;transform:scaleX(0.990);">35</div>
<div class="a" style="left:521.8px;top:284.9px;width:8.1px;height:68.3px;background:#b9b9be;"></div>
<div class="a" style="left:1293.3px;top:284.9px;width:8.4px;height:68.3px;background:#b9b9be;"></div>
<div class="a" style="left:448.0px;top:353.1px;width:72.0px;height:70.4px;background:linear-gradient(to bottom,#eeedeb 0%,#ecebe9 76%,#e0ddd8 90%,#d3d0c9 100%);"></div>
<div class="t" style="left:456.4px;top:378.1px;font-size:23.8px;color:#454545;font-weight:bold;transform-origin:0 50%;transform:scaleX(0.990);">34</div>
<div class="a" style="left:1303.0px;top:353.1px;width:72.0px;height:70.4px;background:linear-gradient(to bottom,#eeedeb 0%,#ecebe9 76%,#e0ddd8 90%,#d3d0c9 100%);"></div>
<div class="t" style="left:1311.4px;top:378.1px;font-size:23.8px;color:#454545;font-weight:bold;transform-origin:0 50%;transform:scaleX(0.990);">34</div>
<div class="a" style="left:521.8px;top:354.9px;width:8.1px;height:68.3px;background:#b9b9be;"></div>
<div class="a" style="left:1293.3px;top:354.9px;width:8.4px;height:68.3px;background:#b9b9be;"></div>
<div class="a" style="left:448.0px;top:423.1px;width:72.0px;height:70.4px;background:linear-gradient(to bottom,#eeedeb 0%,#ecebe9 76%,#e0ddd8 90%,#d3d0c9 100%);"></div>
<div class="t" style="left:456.4px;top:448.1px;font-size:23.8px;color:#454545;font-weight:bold;transform-origin:0 50%;transform:scaleX(0.990);">33</div>
<div class="a" style="left:1303.0px;top:423.1px;width:72.0px;height:70.4px;background:linear-gradient(to bottom,#eeedeb 0%,#ecebe9 76%,#e0ddd8 90%,#d3d0c9 100%);"></div>
<div class="t" style="left:1311.4px;top:448.1px;font-size:23.8px;color:#454545;font-weight:bold;transform-origin:0 50%;transform:scaleX(0.990);">33</div>
<div class="a" style="left:521.8px;top:424.9px;width:8.1px;height:68.3px;background:#b9b9be;"></div>
<div class="a" style="left:1293.3px;top:424.9px;width:8.4px;height:68.3px;background:#b9b9be;"></div>
<div class="a" style="left:448.0px;top:493.0px;width:72.0px;height:70.5px;background:linear-gradient(to bottom,#eeedeb 0%,#ecebe9 76%,#e0ddd8 90%,#d3d0c9 100%);"></div>
<div class="t" style="left:456.4px;top:518.0px;font-size:23.8px;color:#454545;font-weight:bold;transform-origin:0 50%;transform:scaleX(0.990);">32</div>
<div class="a" style="left:1303.0px;top:493.0px;width:72.0px;height:70.5px;background:linear-gradient(to bottom,#eeedeb 0%,#ecebe9 76%,#e0ddd8 90%,#d3d0c9 100%);"></div>
<div class="t" style="left:1311.4px;top:518.0px;font-size:23.8px;color:#454545;font-weight:bold;transform-origin:0 50%;transform:scaleX(0.990);">32</div>
<div class="a" style="left:521.8px;top:494.8px;width:8.1px;height:68.4px;background:#b9b9be;"></div>
<div class="a" style="left:1293.3px;top:494.8px;width:8.4px;height:68.4px;background:#b9b9be;"></div>
<div class="a" style="left:448.0px;top:563.0px;width:72.0px;height:70.5px;background:linear-gradient(to bottom,#eeedeb 0%,#ecebe9 76%,#e0ddd8 90%,#d3d0c9 100%);"></div>
<div class="t" style="left:456.4px;top:588.0px;font-size:23.8px;color:#454545;font-weight:bold;transform-origin:0 50%;transform:scaleX(0.892);">31</div>
<div class="a" style="left:1303.0px;top:563.0px;width:72.0px;height:70.5px;background:linear-gradient(to bottom,#eeedeb 0%,#ecebe9 76%,#e0ddd8 90%,#d3d0c9 100%);"></div>
<div class="t" style="left:1311.4px;top:588.0px;font-size:23.8px;color:#454545;font-weight:bold;transform-origin:0 50%;transform:scaleX(0.892);">31</div>
<div class="a" style="left:521.8px;top:564.8px;width:8.1px;height:68.4px;background:#b9b9be;"></div>
<div class="a" style="left:1293.3px;top:564.8px;width:8.4px;height:68.4px;background:#b9b9be;"></div>
<div class="a" style="left:448.0px;top:632.9px;width:72.0px;height:70.5px;background:linear-gradient(to bottom,#eeedeb 0%,#ecebe9 76%,#e0ddd8 90%,#d3d0c9 100%);"></div>
<div class="t" style="left:456.4px;top:657.9px;font-size:23.8px;color:#454545;font-weight:bold;transform-origin:0 50%;transform:scaleX(0.990);">30</div>
<div class="a" style="left:1303.0px;top:632.9px;width:72.0px;height:70.5px;background:linear-gradient(to bottom,#eeedeb 0%,#ecebe9 76%,#e0ddd8 90%,#d3d0c9 100%);"></div>
<div class="t" style="left:1311.4px;top:657.9px;font-size:23.8px;color:#454545;font-weight:bold;transform-origin:0 50%;transform:scaleX(0.990);">30</div>
<div class="a" style="left:521.8px;top:634.7px;width:8.1px;height:68.4px;background:#b9b9be;"></div>
<div class="a" style="left:1293.3px;top:634.7px;width:8.4px;height:68.4px;background:#b9b9be;"></div>
<div class="a" style="left:448.0px;top:702.9px;width:72.0px;height:70.5px;background:linear-gradient(to bottom,#eeedeb 0%,#ecebe9 76%,#e0ddd8 90%,#d3d0c9 100%);"></div>
<div class="t" style="left:456.4px;top:727.9px;font-size:23.8px;color:#454545;font-weight:bold;transform-origin:0 50%;transform:scaleX(0.990);">29</div>
<div class="a" style="left:1303.0px;top:702.9px;width:72.0px;height:70.5px;background:linear-gradient(to bottom,#eeedeb 0%,#ecebe9 76%,#e0ddd8 90%,#d3d0c9 100%);"></div>
<div class="t" style="left:1311.4px;top:727.9px;font-size:23.8px;color:#454545;font-weight:bold;transform-origin:0 50%;transform:scaleX(0.990);">29</div>
<div class="a" style="left:521.8px;top:704.6px;width:8.1px;height:68.4px;background:#b9b9be;"></div>
<div class="a" style="left:1293.3px;top:704.6px;width:8.4px;height:68.4px;background:#b9b9be;"></div>
<div class="a" style="left:448.0px;top:772.8px;width:72.0px;height:70.5px;background:linear-gradient(to bottom,#eeedeb 0%,#ecebe9 76%,#e0ddd8 90%,#d3d0c9 100%);"></div>
<div class="t" style="left:456.4px;top:797.8px;font-size:23.8px;color:#454545;font-weight:bold;transform-origin:0 50%;transform:scaleX(0.990);">28</div>
<div class="a" style="left:1303.0px;top:772.8px;width:72.0px;height:70.5px;background:linear-gradient(to bottom,#eeedeb 0%,#ecebe9 76%,#e0ddd8 90%,#d3d0c9 100%);"></div>
<div class="t" style="left:1311.4px;top:797.8px;font-size:23.8px;color:#454545;font-weight:bold;transform-origin:0 50%;transform:scaleX(0.990);">28</div>
<div class="a" style="left:521.8px;top:774.6px;width:8.1px;height:68.4px;background:#b9b9be;"></div>
<div class="a" style="left:1293.3px;top:774.6px;width:8.4px;height:68.4px;background:#b9b9be;"></div>
<div class="a" style="left:448.0px;top:842.8px;width:72.0px;height:70.5px;background:linear-gradient(to bottom,#eeedeb 0%,#ecebe9 76%,#e0ddd8 90%,#d3d0c9 100%);"></div>
<div class="t" style="left:456.4px;top:867.8px;font-size:23.8px;color:#454545;font-weight:bold;transform-origin:0 50%;transform:scaleX(0.990);">27</div>
<div class="a" style="left:1303.0px;top:842.8px;width:72.0px;height:70.5px;background:linear-gradient(to bottom,#eeedeb 0%,#ecebe9 76%,#e0ddd8 90%,#d3d0c9 100%);"></div>
<div class="t" style="left:1311.4px;top:867.8px;font-size:23.8px;color:#454545;font-weight:bold;transform-origin:0 50%;transform:scaleX(0.990);">27</div>
<div class="a" style="left:521.8px;top:844.5px;width:8.1px;height:68.4px;background:#b9b9be;"></div>
<div class="a" style="left:1293.3px;top:844.5px;width:8.4px;height:68.4px;background:#b9b9be;"></div>
<div class="a" style="left:448.0px;top:912.7px;width:72.0px;height:70.5px;background:linear-gradient(to bottom,#eeedeb 0%,#ecebe9 76%,#e0ddd8 90%,#d3d0c9 100%);"></div>
<div class="t" style="left:456.4px;top:937.7px;font-size:23.8px;color:#454545;font-weight:bold;transform-origin:0 50%;transform:scaleX(0.990);">26</div>
<div class="a" style="left:1303.0px;top:912.7px;width:72.0px;height:70.5px;background:linear-gradient(to bottom,#eeedeb 0%,#ecebe9 76%,#e0ddd8 90%,#d3d0c9 100%);"></div>
<div class="t" style="left:1311.4px;top:937.7px;font-size:23.8px;color:#454545;font-weight:bold;transform-origin:0 50%;transform:scaleX(0.990);">26</div>
<div class="a" style="left:521.8px;top:914.5px;width:8.1px;height:68.4px;background:#b9b9be;"></div>
<div class="a" style="left:1293.3px;top:914.5px;width:8.4px;height:68.4px;background:#b9b9be;"></div>
<div class="a" style="left:531.0px;top:80.0px;width:761.3px;height:61.8px;background:linear-gradient(135deg,#f1f4f7 0%,#ecf0f4 50%,#e8ecf1 100%);"></div>
<div class="a" style="left:532.2px;top:80.0px;width:93.4px;height:52.6px;background:linear-gradient(135deg,#ffffd2 0%,#fdfdc0 60%,#fbfbc4 100%);border:1px solid #c4c4c8;box-sizing:border-box;"></div>
<div class="a" style="left:627.2px;top:80.0px;width:93.4px;height:52.6px;background:linear-gradient(135deg,#ffffd2 0%,#fdfdc0 60%,#fbfbc4 100%);border:1px solid #c4c4c8;box-sizing:border-box;"></div>
<div class="a" style="left:722.3px;top:80.0px;width:93.4px;height:52.6px;background:linear-gradient(135deg,#f0f0f0 0%,#e9e9e9 100%);border:1px solid #c4c4c8;box-sizing:border-box;"></div>
<div class="a" style="left:817.4px;top:80.0px;width:93.4px;height:52.6px;background:linear-gradient(135deg,#f0f0f0 0%,#e9e9e9 100%);border:1px solid #c4c4c8;box-sizing:border-box;"></div>
<div class="a" style="left:912.4px;top:80.0px;width:93.4px;height:52.6px;background:linear-gradient(135deg,#f0f0f0 0%,#e9e9e9 100%);border:1px solid #c4c4c8;box-sizing:border-box;"></div>
<div class="a" style="left:1007.5px;top:80.0px;width:93.4px;height:52.6px;background:linear-gradient(135deg,#f0f0f0 0%,#e9e9e9 100%);border:1px solid #c4c4c8;box-sizing:border-box;"></div>
<div class="a" style="left:1102.5px;top:80.0px;width:93.4px;height:52.6px;background:linear-gradient(135deg,#f0f0f0 0%,#e9e9e9 100%);border:1px solid #c4c4c8;box-sizing:border-box;"></div>
<div class="a" style="left:1197.6px;top:80.0px;width:93.4px;height:52.6px;background:linear-gradient(135deg,#f0f0f0 0%,#e9e9e9 100%);border:1px solid #c4c4c8;box-sizing:border-box;"></div>
<div class="t" style="left:549.7px;top:82.7px;font-size:12.5px;color:#222;transform-origin:0 50%;">4</div>
<svg style="left:563.8px;top:82.9px;" width="33" height="12" viewBox="0 0 33 12"><rect x="0" y="0" width="33" height="11.4" fill="#15151a"/><rect x="1.2" y="1.6" width="14.6" height="8.2" fill="#1c3f94"/><rect x="17.2" y="1.6" width="14.6" height="8.2" fill="#1c3f94"/><rect x="15.8" y="0.6" width="1.4" height="10.2" fill="#e8e8e8"/><circle cx="8.3" cy="5.7" r="2.7" fill="#b4b7c2"/><circle cx="8.3" cy="5.7" r="1" fill="#858a9c"/><circle cx="24.7" cy="5.7" r="2.7" fill="#b4b7c2"/><circle cx="24.7" cy="5.7" r="1" fill="#858a9c"/></svg>
<div class="t" style="left:549.7px;top:98.1px;font-size:12.5px;color:#222;transform-origin:0 50%;">5</div>
<svg style="left:563.8px;top:98.3px;" width="33" height="12" viewBox="0 0 33 12"><rect x="0" y="0" width="33" height="11.4" fill="#15151a"/><rect x="1.2" y="1.6" width="14.6" height="8.2" fill="#1c3f94"/><rect x="17.2" y="1.6" width="14.6" height="8.2" fill="#1c3f94"/><rect x="15.8" y="0.6" width="1.4" height="10.2" fill="#e8e8e8"/><circle cx="8.3" cy="5.7" r="2.7" fill="#b4b7c2"/><circle cx="8.3" cy="5.7" r="1" fill="#858a9c"/><circle cx="24.7" cy="5.7" r="2.7" fill="#b4b7c2"/><circle cx="24.7" cy="5.7" r="1" fill="#858a9c"/></svg>
<div class="t" style="left:549.7px;top:113.5px;font-size:12.5px;color:#222;transform-origin:0 50%;">6</div>
<svg style="left:563.8px;top:113.7px;" width="33" height="12" viewBox="0 0 33 12"><rect x="0" y="0" width="33" height="11.4" fill="#15151a"/><rect x="1.2" y="1.6" width="14.6" height="8.2" fill="#1c3f94"/><rect x="17.2" y="1.6" width="14.6" height="8.2" fill="#1c3f94"/><rect x="15.8" y="0.6" width="1.4" height="10.2" fill="#e8e8e8"/><circle cx="8.3" cy="5.7" r="2.7" fill="#b4b7c2"/><circle cx="8.3" cy="5.7" r="1" fill="#858a9c"/><circle cx="24.7" cy="5.7" r="2.7" fill="#b4b7c2"/><circle cx="24.7" cy="5.7" r="1" fill="#858a9c"/></svg>
<div class="t" style="left:644.8px;top:82.7px;font-size:12.5px;color:#222;transform-origin:0 50%;">4</div>
<svg style="left:658.9px;top:82.9px;" width="33" height="12" viewBox="0 0 33 12"><rect x="0" y="0" width="33" height="11.4" fill="#15151a"/><rect x="1.2" y="1.6" width="14.6" height="8.2" fill="#1c3f94"/><rect x="17.2" y="1.6" width="14.6" height="8.2" fill="#1c3f94"/><rect x="15.8" y="0.6" width="1.4" height="10.2" fill="#e8e8e8"/><circle cx="8.3" cy="5.7" r="2.7" fill="#b4b7c2"/><circle cx="8.3" cy="5.7" r="1" fill="#858a9c"/><circle cx="24.7" cy="5.7" r="2.7" fill="#b4b7c2"/><circle cx="24.7" cy="5.7" r="1" fill="#858a9c"/></svg>
<div class="t" style="left:644.8px;top:98.1px;font-size:12.5px;color:#222;transform-origin:0 50%;">5</div>
<svg style="left:658.9px;top:98.3px;" width="33" height="12" viewBox="0 0 33 12"><rect x="0" y="0" width="33" height="11.4" fill="#15151a"/><rect x="1.2" y="1.6" width="14.6" height="8.2" fill="#1c3f94"/><rect x="17.2" y="1.6" width="14.6" height="8.2" fill="#1c3f94"/><rect x="15.8" y="0.6" width="1.4" height="10.2" fill="#e8e8e8"/><circle cx="8.3" cy="5.7" r="2.7" fill="#b4b7c2"/><circle cx="8.3" cy="5.7" r="1" fill="#858a9c"/><circle cx="24.7" cy="5.7" r="2.7" fill="#b4b7c2"/><circle cx="24.7" cy="5.7" r="1" fill="#858a9c"/></svg>
<div class="t" style="left:644.8px;top:113.5px;font-size:12.5px;color:#222;transform-origin:0 50%;">6</div>
<svg style="left:658.9px;top:113.7px;" width="33" height="12" viewBox="0 0 33 12"><rect x="0" y="0" width="33" height="11.4" fill="#15151a"/><rect x="1.2" y="1.6" width="14.6" height="8.2" fill="#1c3f94"/><rect x="17.2" y="1.6" width="14.6" height="8.2" fill="#1c3f94"/><rect x="15.8" y="0.6" width="1.4" height="10.2" fill="#e8e8e8"/><circle cx="8.3" cy="5.7" r="2.7" fill="#b4b7c2"/><circle cx="8.3" cy="5.7" r="1" fill="#858a9c"/><circle cx="24.7" cy="5.7" r="2.7" fill="#b4b7c2"/><circle cx="24.7" cy="5.7" r="1" fill="#858a9c"/></svg>
<div class="a" style="left:762.0px;top:86.0px;width:10.0px;height:2.2px;background:#c9ccd1;"></div>
<div class="a" style="left:856.0px;top:86.0px;width:10.0px;height:2.2px;background:#c9ccd1;"></div>
<div class="a" style="left:952.0px;top:86.0px;width:10.0px;height:2.2px;background:#c9ccd1;"></div>
<div class="a" style="left:1044.0px;top:86.0px;width:4.0px;height:2.2px;background:#c9ccd1;"></div>
<div class="a" style="left:1140.0px;top:86.0px;width:12.0px;height:2.2px;background:#c9ccd1;"></div>
<div class="a" style="left:1232.0px;top:86.0px;width:4.0px;height:2.2px;background:#c9ccd1;"></div>
<div class="a" style="left:1240.0px;top:86.0px;width:4.0px;height:2.2px;background:#c9ccd1;"></div>
<div class="a" style="left:531.0px;top:144.8px;width:761.3px;height:11.0px;background:linear-gradient(to bottom,#95baE7 0%,#8fb3e1 45%,#87a6cf 72%,#8795b0 90%,#8a8f9c 100%);"></div>
<div class="a" style="left:531.0px;top:155.8px;width:761.3px;height:55.4px;background:linear-gradient(135deg,#f1f4f7 0%,#ecf0f4 50%,#e8ecf1 100%);border-top:1px solid #fbfcfe;box-sizing:border-box;"></div>
<div class="t" style="left:534.8px;top:146.2px;font-size:9px;color:#eef4fc;transform-origin:0 50%;transform:scaleX(1.057);">Cable Management Panel</div>
<div class="t" style="left:1272.3px;top:146.5px;font-size:8.5px;color:#e4eefa;transform-origin:0 50%;transform:scaleX(0.693);">F</div>
<div class="t" style="left:1281.8px;top:146.5px;font-size:8.5px;color:#cfdff2;transform-origin:0 50%;transform:scaleX(0.717);">R</div>
<div class="t" style="left:678.5px;top:167.8px;font-size:40px;color:#b3b8bf;transform-origin:0 50%;transform:scaleX(0.957);">Cable</div>
<div class="t" style="left:793.0px;top:167.8px;font-size:40px;color:#b3b8bf;transform-origin:0 50%;transform:scaleX(1.030);">Management</div>
<div class="t" style="left:1046.0px;top:167.8px;font-size:40px;color:#b3b8bf;transform-origin:0 50%;transform:scaleX(0.965);">Panel</div>
<div class="a" style="left:531.0px;top:284.6px;width:761.3px;height:15.2px;background:linear-gradient(to bottom,#95baE7 0%,#8fb3e1 45%,#87a6cf 72%,#8795b0 90%,#8a8f9c 100%);"></div>
<div class="a" style="left:531.0px;top:299.8px;width:761.3px;height:121.2px;background:linear-gradient(135deg,#f1f4f7 0%,#ecf0f4 50%,#e8ecf1 100%);border-top:1px solid #fbfcfe;box-sizing:border-box;"></div>
<div class="t" style="left:534.8px;top:286.5px;font-size:12.4px;color:#eef4fc;transform-origin:0 50%;transform:scaleX(0.949);">Cable Management Panel</div>
<div class="t" style="left:1263.9px;top:286.7px;font-size:12.3px;color:#f4f8fe;transform-origin:0 50%;">F</div>
<div class="t" style="left:1278.0px;top:286.7px;font-size:12.3px;color:#dde8f6;transform-origin:0 50%;">R</div>
<div class="t" style="left:540.0px;top:332.3px;font-size:65px;color:#b3b8bf;transform-origin:0 50%;transform:scaleX(0.930);">Cable</div>
<div class="t" style="left:720.7px;top:332.3px;font-size:65px;color:#b3b8bf;transform-origin:0 50%;transform:scaleX(1.014);">Management</div>
<div class="t" style="left:1124.8px;top:332.3px;font-size:65px;color:#b3b8bf;transform-origin:0 50%;transform:scaleX(0.938);">Panel</div>
<div class="a" style="left:531.0px;top:424.6px;width:761.3px;height:11.0px;background:linear-gradient(to bottom,#95baE7 0%,#8fb3e1 45%,#87a6cf 72%,#8795b0 90%,#8a8f9c 100%);"></div>
<div class="a" style="left:531.0px;top:435.6px;width:761.3px;height:55.4px;background:linear-gradient(135deg,#f1f4f7 0%,#ecf0f4 50%,#e8ecf1 100%);border-top:1px solid #fbfcfe;box-sizing:border-box;"></div>
<div class="t" style="left:534.8px;top:426.0px;font-size:9px;color:#eef4fc;transform-origin:0 50%;transform:scaleX(1.069);">PP-BIO-33</div>
<div class="t" style="left:1272.3px;top:426.3px;font-size:8.5px;color:#e4eefa;transform-origin:0 50%;transform:scaleX(0.693);">F</div>
<div class="t" style="left:1281.8px;top:426.3px;font-size:8.5px;color:#cfdff2;transform-origin:0 50%;transform:scaleX(0.717);">R</div>
<div class="a" style="left:531.0px;top:494.5px;width:761.3px;height:11.0px;background:linear-gradient(to bottom,#95baE7 0%,#8fb3e1 45%,#87a6cf 72%,#8795b0 90%,#8a8f9c 100%);"></div>
<div class="a" style="left:531.0px;top:505.5px;width:761.3px;height:55.5px;background:linear-gradient(135deg,#f1f4f7 0%,#ecf0f4 50%,#e8ecf1 100%);border-top:1px solid #fbfcfe;box-sizing:border-box;"></div>
<div class="t" style="left:534.8px;top:496.0px;font-size:9px;color:#eef4fc;transform-origin:0 50%;transform:scaleX(1.069);">PP-BIO-32</div>
<div class="t" style="left:1272.3px;top:496.2px;font-size:8.5px;color:#e4eefa;transform-origin:0 50%;transform:scaleX(0.693);">F</div>
<div class="t" style="left:1281.8px;top:496.2px;font-size:8.5px;color:#cfdff2;transform-origin:0 50%;transform:scaleX(0.717);">R</div>
<div class="a" style="left:531.0px;top:564.5px;width:761.3px;height:11.0px;background:linear-gradient(to bottom,#95baE7 0%,#8fb3e1 45%,#87a6cf 72%,#8795b0 90%,#8a8f9c 100%);"></div>
<div class="a" style="left:531.0px;top:575.5px;width:761.3px;height:55.5px;background:linear-gradient(135deg,#f1f4f7 0%,#ecf0f4 50%,#e8ecf1 100%);border-top:1px solid #fbfcfe;box-sizing:border-box;"></div>
<div class="t" style="left:534.8px;top:565.9px;font-size:9px;color:#eef4fc;transform-origin:0 50%;transform:scaleX(1.098);">Blind Panel</div>
<div class="t" style="left:1272.3px;top:566.2px;font-size:8.5px;color:#e4eefa;transform-origin:0 50%;transform:scaleX(0.693);">F</div>
<div class="t" style="left:1281.8px;top:566.2px;font-size:8.5px;color:#cfdff2;transform-origin:0 50%;transform:scaleX(0.717);">R</div>
<div class="t" style="left:808.7px;top:586.7px;font-size:40px;color:#b3b8bf;transform-origin:0 50%;transform:scaleX(1.049);">Blind</div>
<div class="t" style="left:911.5px;top:586.7px;font-size:40px;color:#b3b8bf;transform-origin:0 50%;transform:scaleX(0.987);">Panel</div>
<div class="a" style="left:531.0px;top:634.4px;width:761.3px;height:11.0px;background:linear-gradient(to bottom,#95baE7 0%,#8fb3e1 45%,#87a6cf 72%,#8795b0 90%,#8a8f9c 100%);"></div>
<div class="a" style="left:531.0px;top:645.4px;width:761.3px;height:55.5px;background:linear-gradient(135deg,#d9e7d6 0%,#cddfc9 50%,#c3d8bf 100%);border-top:1px solid #fbfcfe;box-sizing:border-box;"></div>
<div class="t" style="left:534.8px;top:635.9px;font-size:9px;color:#eef4fc;transform-origin:0 50%;transform:scaleX(1.069);">PP-BIO-30</div>
<div class="t" style="left:1272.3px;top:636.1px;font-size:8.5px;color:#e4eefa;transform-origin:0 50%;transform:scaleX(0.693);">F</div>
<div class="t" style="left:1281.8px;top:636.1px;font-size:8.5px;color:#cfdff2;transform-origin:0 50%;transform:scaleX(0.717);">R</div>
<div class="a" style="left:531.0px;top:704.4px;width:761.3px;height:11.0px;background:linear-gradient(to bottom,#95baE7 0%,#8fb3e1 45%,#87a6cf 72%,#8795b0 90%,#8a8f9c 100%);"></div>
<div class="a" style="left:531.0px;top:715.4px;width:761.3px;height:55.5px;background:linear-gradient(135deg,#d9e7d6 0%,#cddfc9 50%,#c3d8bf 100%);border-top:1px solid #fbfcfe;box-sizing:border-box;"></div>
<div class="t" style="left:534.8px;top:705.8px;font-size:9px;color:#eef4fc;transform-origin:0 50%;transform:scaleX(1.069);">PP-BIO-29</div>
<div class="t" style="left:1272.3px;top:706.1px;font-size:8.5px;color:#e4eefa;transform-origin:0 50%;transform:scaleX(0.693);">F</div>
<div class="t" style="left:1281.8px;top:706.1px;font-size:8.5px;color:#cfdff2;transform-origin:0 50%;transform:scaleX(0.717);">R</div>
<div class="a" style="left:531.0px;top:774.3px;width:761.3px;height:15.2px;background:linear-gradient(to bottom,#95baE7 0%,#8fb3e1 45%,#87a6cf 72%,#8795b0 90%,#8a8f9c 100%);"></div>
<div class="a" style="left:531.0px;top:789.5px;width:761.3px;height:121.2px;background:linear-gradient(135deg,#f1f4f7 0%,#ecf0f4 50%,#e8ecf1 100%);border-top:1px solid #fbfcfe;box-sizing:border-box;"></div>
<div class="t" style="left:534.8px;top:776.2px;font-size:12.4px;color:#eef4fc;transform-origin:0 50%;transform:scaleX(0.949);">Cable Management Panel</div>
<div class="t" style="left:1263.9px;top:776.3px;font-size:12.3px;color:#f4f8fe;transform-origin:0 50%;">F</div>
<div class="t" style="left:1278.0px;top:776.3px;font-size:12.3px;color:#dde8f6;transform-origin:0 50%;">R</div>
<div class="t" style="left:540.0px;top:822.6px;font-size:65px;color:#b3b8bf;transform-origin:0 50%;transform:scaleX(0.930);">Cable</div>
<div class="t" style="left:720.7px;top:822.6px;font-size:65px;color:#b3b8bf;transform-origin:0 50%;transform:scaleX(1.014);">Management</div>
<div class="t" style="left:1124.8px;top:822.6px;font-size:65px;color:#b3b8bf;transform-origin:0 50%;transform:scaleX(0.938);">Panel</div>
<div class="a" style="left:531.0px;top:914.2px;width:761.3px;height:11.0px;background:linear-gradient(to bottom,#95baE7 0%,#8fb3e1 45%,#87a6cf 72%,#8795b0 90%,#8a8f9c 100%);"></div>
<div class="a" style="left:531.0px;top:925.2px;width:761.3px;height:55.5px;background:linear-gradient(135deg,#d9e7d6 0%,#cddfc9 50%,#c3d8bf 100%);border-top:1px solid #fbfcfe;box-sizing:border-box;"></div>
<div class="t" style="left:534.8px;top:915.7px;font-size:9px;color:#eef4fc;transform-origin:0 50%;transform:scaleX(1.069);">PP-BIO-26</div>
<div class="t" style="left:1272.3px;top:915.9px;font-size:8.5px;color:#e4eefa;transform-origin:0 50%;transform:scaleX(0.693);">F</div>
<div class="t" style="left:1281.8px;top:915.9px;font-size:8.5px;color:#cfdff2;transform-origin:0 50%;transform:scaleX(0.717);">R</div>
<div class="a" style="left:531.0px;top:214.5px;width:761.3px;height:11.5px;background:linear-gradient(to bottom,#95baE7 0%,#8fb3e1 45%,#87a6cf 72%,#8795b0 90%,#8a8f9c 100%);"></div>
<div class="a" style="left:531.0px;top:226.0px;width:761.3px;height:56.1px;background:linear-gradient(135deg,#ccd3ee 0%,#bfc7e8 45%,#a9b3df 100%);border-top:1px solid #f4f6fc;box-sizing:border-box;"></div>
<div class="t" style="left:534.8px;top:215.8px;font-size:9px;color:#eef4fc;transform-origin:0 50%;transform:scaleX(0.977);">SW-1582</div>
<div class="t" style="left:1272.3px;top:216.8px;font-size:8.5px;color:#e4eefa;transform-origin:0 50%;transform:scaleX(0.693);">F</div>
<div class="t" style="left:1281.8px;top:216.8px;font-size:8.5px;color:#cfdff2;transform-origin:0 50%;transform:scaleX(0.717);">R</div>
<div class="a" style="left:521px;top:213.0px;width:781px;height:69.8px;border:1px dotted #555;box-sizing:border-box;"></div>
<div class="t" style="left:583.9px;top:230.4px;font-size:11.5px;color:#1a1a1a;transform-origin:0 50%;transform:scaleX(0.970);">1</div>
<div class="t" style="left:583.9px;top:272.8px;font-size:11.5px;color:#1a1a1a;transform-origin:0 50%;transform:scaleX(0.970);">2</div>
<div class="t" style="left:606.5px;top:230.4px;font-size:11.5px;color:#1a1a1a;transform-origin:0 50%;transform:scaleX(0.970);">3</div>
<div class="t" style="left:606.5px;top:272.8px;font-size:11.5px;color:#1a1a1a;transform-origin:0 50%;transform:scaleX(0.970);">4</div>
<div class="t" style="left:629.1px;top:230.4px;font-size:11.5px;color:#1a1a1a;transform-origin:0 50%;transform:scaleX(0.970);">5</div>
<div class="t" style="left:629.1px;top:272.8px;font-size:11.5px;color:#1a1a1a;transform-origin:0 50%;transform:scaleX(0.970);">6</div>
<div class="t" style="left:651.7px;top:230.4px;font-size:11.5px;color:#1a1a1a;transform-origin:0 50%;transform:scaleX(0.970);">7</div>
<div class="t" style="left:651.7px;top:272.8px;font-size:11.5px;color:#1a1a1a;transform-origin:0 50%;transform:scaleX(0.970);">8</div>
<div class="t" style="left:674.3px;top:230.4px;font-size:11.5px;color:#1a1a1a;transform-origin:0 50%;transform:scaleX(0.970);">9</div>
<div class="t" style="left:671.2px;top:272.8px;font-size:11.5px;color:#1a1a1a;transform-origin:0 50%;transform:scaleX(0.970);">10</div>
<div class="t" style="left:694.2px;top:230.4px;font-size:11.5px;color:#1a1a1a;transform-origin:0 50%;transform:scaleX(0.970);">11</div>
<div class="t" style="left:693.8px;top:272.8px;font-size:11.5px;color:#1a1a1a;transform-origin:0 50%;transform:scaleX(0.970);">12</div>
<div class="t" style="left:723.2px;top:230.4px;font-size:11.5px;color:#1a1a1a;transform-origin:0 50%;transform:scaleX(0.970);">13</div>
<div class="t" style="left:723.2px;top:272.8px;font-size:11.5px;color:#1a1a1a;transform-origin:0 50%;transform:scaleX(0.970);">14</div>
<div class="t" style="left:745.8px;top:230.4px;font-size:11.5px;color:#1a1a1a;transform-origin:0 50%;transform:scaleX(0.970);">15</div>
<div class="t" style="left:745.8px;top:272.8px;font-size:11.5px;color:#1a1a1a;transform-origin:0 50%;transform:scaleX(0.970);">16</div>
<div class="t" style="left:768.4px;top:230.4px;font-size:11.5px;color:#1a1a1a;transform-origin:0 50%;transform:scaleX(0.970);">17</div>
<div class="t" style="left:768.4px;top:272.8px;font-size:11.5px;color:#1a1a1a;transform-origin:0 50%;transform:scaleX(0.970);">18</div>
<div class="t" style="left:791.0px;top:230.4px;font-size:11.5px;color:#1a1a1a;transform-origin:0 50%;transform:scaleX(0.970);">19</div>
<div class="t" style="left:791.0px;top:272.8px;font-size:11.5px;color:#1a1a1a;transform-origin:0 50%;transform:scaleX(0.970);">20</div>
<div class="t" style="left:813.6px;top:230.4px;font-size:11.5px;color:#1a1a1a;transform-origin:0 50%;transform:scaleX(0.970);">21</div>
<div class="t" style="left:813.6px;top:272.8px;font-size:11.5px;color:#1a1a1a;transform-origin:0 50%;transform:scaleX(0.970);">22</div>
<div class="t" style="left:836.2px;top:230.4px;font-size:11.5px;color:#1a1a1a;transform-origin:0 50%;transform:scaleX(0.970);">23</div>
<div class="t" style="left:836.2px;top:272.8px;font-size:11.5px;color:#1a1a1a;transform-origin:0 50%;transform:scaleX(0.970);">24</div>
<div class="t" style="left:866.6px;top:230.4px;font-size:11.5px;color:#1a1a1a;transform-origin:0 50%;transform:scaleX(0.970);">25</div>
<div class="t" style="left:866.6px;top:272.8px;font-size:11.5px;color:#1a1a1a;transform-origin:0 50%;transform:scaleX(0.970);">26</div>
<div class="t" style="left:889.2px;top:230.4px;font-size:11.5px;color:#1a1a1a;transform-origin:0 50%;transform:scaleX(0.970);">27</div>
<div class="t" style="left:889.2px;top:272.8px;font-size:11.5px;color:#1a1a1a;transform-origin:0 50%;transform:scaleX(0.970);">28</div>
<div class="t" style="left:911.8px;top:230.4px;font-size:11.5px;color:#1a1a1a;transform-origin:0 50%;transform:scaleX(0.970);">29</div>
<div class="t" style="left:911.8px;top:272.8px;font-size:11.5px;color:#1a1a1a;transform-origin:0 50%;transform:scaleX(0.970);">30</div>
<div class="t" style="left:934.4px;top:230.4px;font-size:11.5px;color:#1a1a1a;transform-origin:0 50%;transform:scaleX(0.970);">31</div>
<div class="t" style="left:934.4px;top:272.8px;font-size:11.5px;color:#1a1a1a;transform-origin:0 50%;transform:scaleX(0.970);">32</div>
<div class="t" style="left:957.0px;top:230.4px;font-size:11.5px;color:#1a1a1a;transform-origin:0 50%;transform:scaleX(0.970);">33</div>
<div class="t" style="left:957.0px;top:272.8px;font-size:11.5px;color:#1a1a1a;transform-origin:0 50%;transform:scaleX(0.970);">34</div>
<div class="t" style="left:979.6px;top:230.4px;font-size:11.5px;color:#1a1a1a;transform-origin:0 50%;transform:scaleX(0.970);">35</div>
<div class="t" style="left:979.6px;top:272.8px;font-size:11.5px;color:#1a1a1a;transform-origin:0 50%;transform:scaleX(0.970);">36</div>
<div class="t" style="left:1008.8px;top:230.4px;font-size:11.5px;color:#1a1a1a;transform-origin:0 50%;transform:scaleX(0.970);">37</div>
<div class="t" style="left:1008.8px;top:272.8px;font-size:11.5px;color:#1a1a1a;transform-origin:0 50%;transform:scaleX(0.970);">38</div>
<div class="t" style="left:1031.4px;top:230.4px;font-size:11.5px;color:#1a1a1a;transform-origin:0 50%;transform:scaleX(0.970);">39</div>
<div class="t" style="left:1031.4px;top:272.8px;font-size:11.5px;color:#1a1a1a;transform-origin:0 50%;transform:scaleX(0.970);">40</div>
<div class="t" style="left:1054.0px;top:230.4px;font-size:11.5px;color:#1a1a1a;transform-origin:0 50%;transform:scaleX(0.970);">41</div>
<div class="t" style="left:1054.0px;top:272.8px;font-size:11.5px;color:#1a1a1a;transform-origin:0 50%;transform:scaleX(0.970);">42</div>
<div class="t" style="left:1076.6px;top:230.4px;font-size:11.5px;color:#1a1a1a;transform-origin:0 50%;transform:scaleX(0.970);">43</div>
<div class="t" style="left:1076.6px;top:272.8px;font-size:11.5px;color:#1a1a1a;transform-origin:0 50%;transform:scaleX(0.970);">44</div>
<div class="t" style="left:1099.2px;top:230.4px;font-size:11.5px;color:#1a1a1a;transform-origin:0 50%;transform:scaleX(0.970);">45</div>
<div class="t" style="left:1099.2px;top:272.8px;font-size:11.5px;color:#1a1a1a;transform-origin:0 50%;transform:scaleX(0.970);">46</div>
<div class="t" style="left:1121.8px;top:230.4px;font-size:11.5px;color:#1a1a1a;transform-origin:0 50%;transform:scaleX(0.970);">47</div>
<div class="t" style="left:1121.8px;top:272.8px;font-size:11.5px;color:#1a1a1a;transform-origin:0 50%;transform:scaleX(0.970);">48</div>
<div class="t" style="left:554.6px;top:448.5px;font-size:11.5px;color:#1a1a1a;transform-origin:0 50%;transform:scaleX(0.970);">1</div>
<div class="t" style="left:584.8px;top:448.5px;font-size:11.5px;color:#1a1a1a;transform-origin:0 50%;transform:scaleX(0.970);">2</div>
<div class="t" style="left:614.9px;top:448.5px;font-size:11.5px;color:#1a1a1a;transform-origin:0 50%;transform:scaleX(0.970);">3</div>
<div class="t" style="left:645.1px;top:448.5px;font-size:11.5px;color:#1a1a1a;transform-origin:0 50%;transform:scaleX(0.970);">4</div>
<div class="t" style="left:675.2px;top:448.5px;font-size:11.5px;color:#1a1a1a;transform-origin:0 50%;transform:scaleX(0.970);">5</div>
<div class="t" style="left:705.4px;top:448.5px;font-size:11.5px;color:#1a1a1a;transform-origin:0 50%;transform:scaleX(0.970);">6</div>
<div class="t" style="left:735.6px;top:448.5px;font-size:11.5px;color:#1a1a1a;transform-origin:0 50%;transform:scaleX(0.970);">7</div>
<div class="t" style="left:765.7px;top:448.5px;font-size:11.5px;color:#1a1a1a;transform-origin:0 50%;transform:scaleX(0.970);">8</div>
<div class="t" style="left:795.9px;top:448.5px;font-size:11.5px;color:#1a1a1a;transform-origin:0 50%;transform:scaleX(0.970);">9</div>
<div class="t" style="left:822.9px;top:448.5px;font-size:11.5px;color:#1a1a1a;transform-origin:0 50%;transform:scaleX(0.970);">10</div>
<div class="t" style="left:853.5px;top:448.5px;font-size:11.5px;color:#1a1a1a;transform-origin:0 50%;transform:scaleX(0.970);">11</div>
<div class="t" style="left:883.3px;top:448.5px;font-size:11.5px;color:#1a1a1a;transform-origin:0 50%;transform:scaleX(0.970);">12</div>
<div class="t" style="left:913.4px;top:448.5px;font-size:11.5px;color:#1a1a1a;transform-origin:0 50%;transform:scaleX(0.970);">13</div>
<div class="t" style="left:943.6px;top:448.5px;font-size:11.5px;color:#1a1a1a;transform-origin:0 50%;transform:scaleX(0.970);">14</div>
<div class="t" style="left:973.7px;top:448.5px;font-size:11.5px;color:#1a1a1a;transform-origin:0 50%;transform:scaleX(0.970);">15</div>
<div class="t" style="left:1003.9px;top:448.5px;font-size:11.5px;color:#1a1a1a;transform-origin:0 50%;transform:scaleX(0.970);">16</div>
<div class="t" style="left:1034.1px;top:448.5px;font-size:11.5px;color:#1a1a1a;transform-origin:0 50%;transform:scaleX(0.970);">17</div>
<div class="t" style="left:1064.2px;top:448.5px;font-size:11.5px;color:#1a1a1a;transform-origin:0 50%;transform:scaleX(0.970);">18</div>
<div class="t" style="left:1094.4px;top:448.5px;font-size:11.5px;color:#1a1a1a;transform-origin:0 50%;transform:scaleX(0.970);">19</div>
<div class="t" style="left:1124.5px;top:448.5px;font-size:11.5px;color:#1a1a1a;transform-origin:0 50%;transform:scaleX(0.970);">20</div>
<div class="t" style="left:1154.7px;top:448.5px;font-size:11.5px;color:#1a1a1a;transform-origin:0 50%;transform:scaleX(0.970);">21</div>
<div class="t" style="left:1184.9px;top:448.5px;font-size:11.5px;color:#1a1a1a;transform-origin:0 50%;transform:scaleX(0.970);">22</div>
<div class="t" style="left:1215.0px;top:448.5px;font-size:11.5px;color:#1a1a1a;transform-origin:0 50%;transform:scaleX(0.970);">23</div>
<div class="t" style="left:1245.2px;top:448.5px;font-size:11.5px;color:#1a1a1a;transform-origin:0 50%;transform:scaleX(0.970);">24</div>
<div class="t" style="left:554.6px;top:519.0px;font-size:11.5px;color:#1a1a1a;transform-origin:0 50%;transform:scaleX(0.970);">1</div>
<div class="t" style="left:584.8px;top:519.0px;font-size:11.5px;color:#1a1a1a;transform-origin:0 50%;transform:scaleX(0.970);">2</div>
<div class="t" style="left:614.9px;top:519.0px;font-size:11.5px;color:#1a1a1a;transform-origin:0 50%;transform:scaleX(0.970);">3</div>
<div class="t" style="left:645.1px;top:519.0px;font-size:11.5px;color:#1a1a1a;transform-origin:0 50%;transform:scaleX(0.970);">4</div>
<div class="t" style="left:675.2px;top:519.0px;font-size:11.5px;color:#1a1a1a;transform-origin:0 50%;transform:scaleX(0.970);">5</div>
<div class="t" style="left:705.4px;top:519.0px;font-size:11.5px;color:#1a1a1a;transform-origin:0 50%;transform:scaleX(0.970);">6</div>
<div class="t" style="left:735.6px;top:519.0px;font-size:11.5px;color:#1a1a1a;transform-origin:0 50%;transform:scaleX(0.970);">7</div>
<div class="t" style="left:765.7px;top:519.0px;font-size:11.5px;color:#1a1a1a;transform-origin:0 50%;transform:scaleX(0.970);">8</div>
<div class="t" style="left:795.9px;top:519.0px;font-size:11.5px;color:#1a1a1a;transform-origin:0 50%;transform:scaleX(0.970);">9</div>
<div class="t" style="left:822.9px;top:519.0px;font-size:11.5px;color:#1a1a1a;transform-origin:0 50%;transform:scaleX(0.970);">10</div>
<div class="t" style="left:853.5px;top:519.0px;font-size:11.5px;color:#1a1a1a;transform-origin:0 50%;transform:scaleX(0.970);">11</div>
<div class="t" style="left:883.3px;top:519.0px;font-size:11.5px;color:#1a1a1a;transform-origin:0 50%;transform:scaleX(0.970);">12</div>
<div class="t" style="left:913.4px;top:519.0px;font-size:11.5px;color:#1a1a1a;transform-origin:0 50%;transform:scaleX(0.970);">13</div>
<div class="t" style="left:943.6px;top:519.0px;font-size:11.5px;color:#1a1a1a;transform-origin:0 50%;transform:scaleX(0.970);">14</div>
<div class="t" style="left:973.7px;top:519.0px;font-size:11.5px;color:#1a1a1a;transform-origin:0 50%;transform:scaleX(0.970);">15</div>
<div class="t" style="left:1003.9px;top:519.0px;font-size:11.5px;color:#1a1a1a;transform-origin:0 50%;transform:scaleX(0.970);">16</div>
<div class="t" style="left:1034.1px;top:519.0px;font-size:11.5px;color:#1a1a1a;transform-origin:0 50%;transform:scaleX(0.970);">17</div>
<div class="t" style="left:1064.2px;top:519.0px;font-size:11.5px;color:#1a1a1a;transform-origin:0 50%;transform:scaleX(0.970);">18</div>
<div class="t" style="left:1094.4px;top:519.0px;font-size:11.5px;color:#1a1a1a;transform-origin:0 50%;transform:scaleX(0.970);">19</div>
<div class="t" style="left:1124.5px;top:519.0px;font-size:11.5px;color:#1a1a1a;transform-origin:0 50%;transform:scaleX(0.970);">20</div>
<div class="t" style="left:1154.7px;top:519.0px;font-size:11.5px;color:#1a1a1a;transform-origin:0 50%;transform:scaleX(0.970);">21</div>
<div class="t" style="left:1184.9px;top:519.0px;font-size:11.5px;color:#1a1a1a;transform-origin:0 50%;transform:scaleX(0.970);">22</div>
<div class="t" style="left:1215.0px;top:519.0px;font-size:11.5px;color:#1a1a1a;transform-origin:0 50%;transform:scaleX(0.970);">23</div>
<div class="t" style="left:1245.2px;top:519.0px;font-size:11.5px;color:#1a1a1a;transform-origin:0 50%;transform:scaleX(0.970);">24</div>
<div class="t" style="left:605.2px;top:662.4px;font-size:11.5px;color:#1a1a1a;transform-origin:0 50%;transform:scaleX(0.970);">1</div>
<div class="t" style="left:630.1px;top:662.4px;font-size:11.5px;color:#1a1a1a;transform-origin:0 50%;transform:scaleX(0.970);">2</div>
<div class="t" style="left:654.9px;top:662.4px;font-size:11.5px;color:#1a1a1a;transform-origin:0 50%;transform:scaleX(0.970);">3</div>
<div class="t" style="left:679.8px;top:662.4px;font-size:11.5px;color:#1a1a1a;transform-origin:0 50%;transform:scaleX(0.970);">4</div>
<div class="t" style="left:704.7px;top:662.4px;font-size:11.5px;color:#1a1a1a;transform-origin:0 50%;transform:scaleX(0.970);">5</div>
<div class="t" style="left:729.5px;top:662.4px;font-size:11.5px;color:#1a1a1a;transform-origin:0 50%;transform:scaleX(0.970);">6</div>
<div class="t" style="left:754.4px;top:662.4px;font-size:11.5px;color:#1a1a1a;transform-origin:0 50%;transform:scaleX(0.970);">7</div>
<div class="t" style="left:779.3px;top:662.4px;font-size:11.5px;color:#1a1a1a;transform-origin:0 50%;transform:scaleX(0.970);">8</div>
<div class="t" style="left:804.2px;top:662.4px;font-size:11.5px;color:#1a1a1a;transform-origin:0 50%;transform:scaleX(0.970);">9</div>
<div class="t" style="left:825.9px;top:662.4px;font-size:11.5px;color:#1a1a1a;transform-origin:0 50%;transform:scaleX(0.970);">10</div>
<div class="t" style="left:851.2px;top:662.4px;font-size:11.5px;color:#1a1a1a;transform-origin:0 50%;transform:scaleX(0.970);">11</div>
<div class="t" style="left:875.7px;top:662.4px;font-size:11.5px;color:#1a1a1a;transform-origin:0 50%;transform:scaleX(0.970);">12</div>
<div class="t" style="left:900.5px;top:662.4px;font-size:11.5px;color:#1a1a1a;transform-origin:0 50%;transform:scaleX(0.970);">13</div>
<div class="t" style="left:925.4px;top:662.4px;font-size:11.5px;color:#1a1a1a;transform-origin:0 50%;transform:scaleX(0.970);">14</div>
<div class="t" style="left:950.3px;top:662.4px;font-size:11.5px;color:#1a1a1a;transform-origin:0 50%;transform:scaleX(0.970);">15</div>
<div class="t" style="left:975.1px;top:662.4px;font-size:11.5px;color:#1a1a1a;transform-origin:0 50%;transform:scaleX(0.970);">16</div>
<div class="t" style="left:1000.0px;top:662.4px;font-size:11.5px;color:#1a1a1a;transform-origin:0 50%;transform:scaleX(0.970);">17</div>
<div class="t" style="left:1024.9px;top:662.4px;font-size:11.5px;color:#1a1a1a;transform-origin:0 50%;transform:scaleX(0.970);">18</div>
<div class="t" style="left:1049.8px;top:662.4px;font-size:11.5px;color:#1a1a1a;transform-origin:0 50%;transform:scaleX(0.970);">19</div>
<div class="t" style="left:1074.6px;top:662.4px;font-size:11.5px;color:#1a1a1a;transform-origin:0 50%;transform:scaleX(0.970);">20</div>
<div class="t" style="left:1099.5px;top:662.4px;font-size:11.5px;color:#1a1a1a;transform-origin:0 50%;transform:scaleX(0.970);">21</div>
<div class="t" style="left:1124.4px;top:662.4px;font-size:11.5px;color:#1a1a1a;transform-origin:0 50%;transform:scaleX(0.970);">22</div>
<div class="t" style="left:1149.2px;top:662.4px;font-size:11.5px;color:#1a1a1a;transform-origin:0 50%;transform:scaleX(0.970);">23</div>
<div class="t" style="left:1174.1px;top:662.4px;font-size:11.5px;color:#1a1a1a;transform-origin:0 50%;transform:scaleX(0.970);">24</div>
<div class="t" style="left:1199.0px;top:662.4px;font-size:11.5px;color:#1a1a1a;transform-origin:0 50%;transform:scaleX(0.970);">25</div>
<div class="t" style="left:605.2px;top:732.4px;font-size:11.5px;color:#1a1a1a;transform-origin:0 50%;transform:scaleX(0.970);">1</div>
<div class="t" style="left:630.1px;top:732.4px;font-size:11.5px;color:#1a1a1a;transform-origin:0 50%;transform:scaleX(0.970);">2</div>
<div class="t" style="left:654.9px;top:732.4px;font-size:11.5px;color:#1a1a1a;transform-origin:0 50%;transform:scaleX(0.970);">3</div>
<div class="t" style="left:679.8px;top:732.4px;font-size:11.5px;color:#1a1a1a;transform-origin:0 50%;transform:scaleX(0.970);">4</div>
<div class="t" style="left:704.7px;top:732.4px;font-size:11.5px;color:#1a1a1a;transform-origin:0 50%;transform:scaleX(0.970);">5</div>
<div class="t" style="left:729.5px;top:732.4px;font-size:11.5px;color:#1a1a1a;transform-origin:0 50%;transform:scaleX(0.970);">6</div>
<div class="t" style="left:754.4px;top:732.4px;font-size:11.5px;color:#1a1a1a;transform-origin:0 50%;transform:scaleX(0.970);">7</div>
<div class="t" style="left:779.3px;top:732.4px;font-size:11.5px;color:#1a1a1a;transform-origin:0 50%;transform:scaleX(0.970);">8</div>
<div class="t" style="left:804.2px;top:732.4px;font-size:11.5px;color:#1a1a1a;transform-origin:0 50%;transform:scaleX(0.970);">9</div>
<div class="t" style="left:825.9px;top:732.4px;font-size:11.5px;color:#1a1a1a;transform-origin:0 50%;transform:scaleX(0.970);">10</div>
<div class="t" style="left:851.2px;top:732.4px;font-size:11.5px;color:#1a1a1a;transform-origin:0 50%;transform:scaleX(0.970);">11</div>
<div class="t" style="left:875.7px;top:732.4px;font-size:11.5px;color:#1a1a1a;transform-origin:0 50%;transform:scaleX(0.970);">12</div>
<div class="t" style="left:900.5px;top:732.4px;font-size:11.5px;color:#1a1a1a;transform-origin:0 50%;transform:scaleX(0.970);">13</div>
<div class="t" style="left:925.4px;top:732.4px;font-size:11.5px;color:#1a1a1a;transform-origin:0 50%;transform:scaleX(0.970);">14</div>
<div class="t" style="left:950.3px;top:732.4px;font-size:11.5px;color:#1a1a1a;transform-origin:0 50%;transform:scaleX(0.970);">15</div>
<div class="t" style="left:975.1px;top:732.4px;font-size:11.5px;color:#1a1a1a;transform-origin:0 50%;transform:scaleX(0.970);">16</div>
<div class="t" style="left:1000.0px;top:732.4px;font-size:11.5px;color:#1a1a1a;transform-origin:0 50%;transform:scaleX(0.970);">17</div>
<div class="t" style="left:1024.9px;top:732.4px;font-size:11.5px;color:#1a1a1a;transform-origin:0 50%;transform:scaleX(0.970);">18</div>
<div class="t" style="left:1049.8px;top:732.4px;font-size:11.5px;color:#1a1a1a;transform-origin:0 50%;transform:scaleX(0.970);">19</div>
<div class="t" style="left:1074.6px;top:732.4px;font-size:11.5px;color:#1a1a1a;transform-origin:0 50%;transform:scaleX(0.970);">20</div>
<div class="t" style="left:1099.5px;top:732.4px;font-size:11.5px;color:#1a1a1a;transform-origin:0 50%;transform:scaleX(0.970);">21</div>
<div class="t" style="left:1124.4px;top:732.4px;font-size:11.5px;color:#1a1a1a;transform-origin:0 50%;transform:scaleX(0.970);">22</div>
<div class="t" style="left:1149.2px;top:732.4px;font-size:11.5px;color:#1a1a1a;transform-origin:0 50%;transform:scaleX(0.970);">23</div>
<div class="t" style="left:1174.1px;top:732.4px;font-size:11.5px;color:#1a1a1a;transform-origin:0 50%;transform:scaleX(0.970);">24</div>
<div class="t" style="left:1199.0px;top:732.4px;font-size:11.5px;color:#1a1a1a;transform-origin:0 50%;transform:scaleX(0.970);">25</div>
<div class="t" style="left:605.2px;top:941.7px;font-size:11.5px;color:#1a1a1a;transform-origin:0 50%;transform:scaleX(0.970);">1</div>
<div class="t" style="left:630.1px;top:941.7px;font-size:11.5px;color:#1a1a1a;transform-origin:0 50%;transform:scaleX(0.970);">2</div>
<div class="t" style="left:654.9px;top:941.7px;font-size:11.5px;color:#1a1a1a;transform-origin:0 50%;transform:scaleX(0.970);">3</div>
<div class="t" style="left:679.8px;top:941.7px;font-size:11.5px;color:#1a1a1a;transform-origin:0 50%;transform:scaleX(0.970);">4</div>
<div class="t" style="left:704.7px;top:941.7px;font-size:11.5px;color:#1a1a1a;transform-origin:0 50%;transform:scaleX(0.970);">5</div>
<div class="t" style="left:729.5px;top:941.7px;font-size:11.5px;color:#1a1a1a;transform-origin:0 50%;transform:scaleX(0.970);">6</div>
<div class="t" style="left:754.4px;top:941.7px;font-size:11.5px;color:#1a1a1a;transform-origin:0 50%;transform:scaleX(0.970);">7</div>
<div class="t" style="left:779.3px;top:941.7px;font-size:11.5px;color:#1a1a1a;transform-origin:0 50%;transform:scaleX(0.970);">8</div>
<div class="t" style="left:804.2px;top:941.7px;font-size:11.5px;color:#1a1a1a;transform-origin:0 50%;transform:scaleX(0.970);">9</div>
<div class="t" style="left:825.9px;top:941.7px;font-size:11.5px;color:#1a1a1a;transform-origin:0 50%;transform:scaleX(0.970);">10</div>
<div class="t" style="left:851.2px;top:941.7px;font-size:11.5px;color:#1a1a1a;transform-origin:0 50%;transform:scaleX(0.970);">11</div>
<div class="t" style="left:875.7px;top:941.7px;font-size:11.5px;color:#1a1a1a;transform-origin:0 50%;transform:scaleX(0.970);">12</div>
<div class="t" style="left:900.5px;top:941.7px;font-size:11.5px;color:#1a1a1a;transform-origin:0 50%;transform:scaleX(0.970);">13</div>
<div class="t" style="left:925.4px;top:941.7px;font-size:11.5px;color:#1a1a1a;transform-origin:0 50%;transform:scaleX(0.970);">14</div>
<div class="t" style="left:950.3px;top:941.7px;font-size:11.5px;color:#1a1a1a;transform-origin:0 50%;transform:scaleX(0.970);">15</div>
<div class="t" style="left:975.1px;top:941.7px;font-size:11.5px;color:#1a1a1a;transform-origin:0 50%;transform:scaleX(0.970);">16</div>
<div class="t" style="left:1000.0px;top:941.7px;font-size:11.5px;color:#1a1a1a;transform-origin:0 50%;transform:scaleX(0.970);">17</div>
<div class="t" style="left:1024.9px;top:941.7px;font-size:11.5px;color:#1a1a1a;transform-origin:0 50%;transform:scaleX(0.970);">18</div>
<div class="t" style="left:1049.8px;top:941.7px;font-size:11.5px;color:#1a1a1a;transform-origin:0 50%;transform:scaleX(0.970);">19</div>
<div class="t" style="left:1074.6px;top:941.7px;font-size:11.5px;color:#1a1a1a;transform-origin:0 50%;transform:scaleX(0.970);">20</div>
<div class="t" style="left:1099.5px;top:941.7px;font-size:11.5px;color:#1a1a1a;transform-origin:0 50%;transform:scaleX(0.970);">21</div>
<div class="t" style="left:1124.4px;top:941.7px;font-size:11.5px;color:#1a1a1a;transform-origin:0 50%;transform:scaleX(0.970);">22</div>
<div class="t" style="left:1149.2px;top:941.7px;font-size:11.5px;color:#1a1a1a;transform-origin:0 50%;transform:scaleX(0.970);">23</div>
<div class="t" style="left:1174.1px;top:941.7px;font-size:11.5px;color:#1a1a1a;transform-origin:0 50%;transform:scaleX(0.970);">24</div>
<div class="t" style="left:1199.0px;top:941.7px;font-size:11.5px;color:#1a1a1a;transform-origin:0 50%;transform:scaleX(0.970);">25</div>
<svg style="left:0;top:0" width="1960" height="1089" viewBox="0 0 1960 1089"><path d="M581.4 253.7 v-6.2 h1.8 l1.5 -3.8 h4.6 l1.5 3.8 h1.8 v6.2 z" fill="#0b8a0d" stroke="#1a1a1a" stroke-width="0.4"/><rect x="583.6" y="250.4" width="6.8" height="2.2" fill="#d3d3c2"/><path d="M580.8 260.5 h12.4 v7.8 h-2.3 l-1.7 3 h-4.4 l-1.7 -3 h-2.3 z" fill="#1f4297" stroke="#1a1a1a" stroke-width="0.5"/><rect x="583.6" y="261.0" width="6.8" height="2.4" fill="#d3d3c2"/><path d="M604.0 253.7 v-6.2 h1.8 l1.5 -3.8 h4.6 l1.5 3.8 h1.8 v6.2 z" fill="#0b8a0d" stroke="#1a1a1a" stroke-width="0.4"/><rect x="606.2" y="250.4" width="6.8" height="2.2" fill="#d3d3c2"/><path d="M603.4 260.5 h12.4 v7.8 h-2.3 l-1.7 3 h-4.4 l-1.7 -3 h-2.3 z" fill="#1f4297" stroke="#1a1a1a" stroke-width="0.5"/><rect x="606.2" y="261.0" width="6.8" height="2.4" fill="#d3d3c2"/><path d="M626.6 253.7 v-6.2 h1.8 l1.5 -3.8 h4.6 l1.5 3.8 h1.8 v6.2 z" fill="#0b8a0d" stroke="#1a1a1a" stroke-width="0.4"/><rect x="628.8" y="250.4" width="6.8" height="2.2" fill="#d3d3c2"/><path d="M626.0 260.5 h12.4 v7.8 h-2.3 l-1.7 3 h-4.4 l-1.7 -3 h-2.3 z" fill="#1f4297" stroke="#1a1a1a" stroke-width="0.5"/><rect x="628.8" y="261.0" width="6.8" height="2.4" fill="#d3d3c2"/><path d="M649.2 253.7 v-6.2 h1.8 l1.5 -3.8 h4.6 l1.5 3.8 h1.8 v6.2 z" fill="#0b8a0d" stroke="#1a1a1a" stroke-width="0.4"/><rect x="651.4" y="250.4" width="6.8" height="2.2" fill="#d3d3c2"/><path d="M648.6 260.5 h12.4 v7.8 h-2.3 l-1.7 3 h-4.4 l-1.7 -3 h-2.3 z" fill="#1f4297" stroke="#1a1a1a" stroke-width="0.5"/><rect x="651.4" y="261.0" width="6.8" height="2.4" fill="#d3d3c2"/><path d="M671.8 253.7 v-6.2 h1.8 l1.5 -3.8 h4.6 l1.5 3.8 h1.8 v6.2 z" fill="#0b8a0d" stroke="#1a1a1a" stroke-width="0.4"/><rect x="674.0" y="250.4" width="6.8" height="2.2" fill="#d3d3c2"/><path d="M671.2 260.5 h12.4 v7.8 h-2.3 l-1.7 3 h-4.4 l-1.7 -3 h-2.3 z" fill="#1f4297" stroke="#1a1a1a" stroke-width="0.5"/><rect x="674.0" y="261.0" width="6.8" height="2.4" fill="#d3d3c2"/><path d="M694.4 253.7 v-6.2 h1.8 l1.5 -3.8 h4.6 l1.5 3.8 h1.8 v6.2 z" fill="#0b8a0d" stroke="#1a1a1a" stroke-width="0.4"/><rect x="696.6" y="250.4" width="6.8" height="2.2" fill="#d3d3c2"/><path d="M693.8 260.5 h12.4 v7.8 h-2.3 l-1.7 3 h-4.4 l-1.7 -3 h-2.3 z" fill="#1f4297" stroke="#1a1a1a" stroke-width="0.5"/><rect x="696.6" y="261.0" width="6.8" height="2.4" fill="#d3d3c2"/><path d="M723.8 253.7 v-6.2 h1.8 l1.5 -3.8 h4.6 l1.5 3.8 h1.8 v6.2 z" fill="#0b8a0d" stroke="#1a1a1a" stroke-width="0.4"/><rect x="726.0" y="250.4" width="6.8" height="2.2" fill="#d3d3c2"/><path d="M723.2 260.5 h12.4 v7.8 h-2.3 l-1.7 3 h-4.4 l-1.7 -3 h-2.3 z" fill="#1f4297" stroke="#1a1a1a" stroke-width="0.5"/><rect x="726.0" y="261.0" width="6.8" height="2.4" fill="#d3d3c2"/><path d="M746.4 253.7 v-6.2 h1.8 l1.5 -3.8 h4.6 l1.5 3.8 h1.8 v6.2 z" fill="#0b8a0d" stroke="#1a1a1a" stroke-width="0.4"/><rect x="748.6" y="250.4" width="6.8" height="2.2" fill="#d3d3c2"/><path d="M745.8 260.5 h12.4 v7.8 h-2.3 l-1.7 3 h-4.4 l-1.7 -3 h-2.3 z" fill="#1f4297" stroke="#1a1a1a" stroke-width="0.5"/><rect x="748.6" y="261.0" width="6.8" height="2.4" fill="#d3d3c2"/><path d="M769.0 253.7 v-6.2 h1.8 l1.5 -3.8 h4.6 l1.5 3.8 h1.8 v6.2 z" fill="#0b8a0d" stroke="#1a1a1a" stroke-width="0.4"/><rect x="771.2" y="250.4" width="6.8" height="2.2" fill="#d3d3c2"/><path d="M768.4 260.5 h12.4 v7.8 h-2.3 l-1.7 3 h-4.4 l-1.7 -3 h-2.3 z" fill="#1f4297" stroke="#1a1a1a" stroke-width="0.5"/><rect x="771.2" y="261.0" width="6.8" height="2.4" fill="#d3d3c2"/><path d="M791.6 253.7 v-6.2 h1.8 l1.5 -3.8 h4.6 l1.5 3.8 h1.8 v6.2 z" fill="#0b8a0d" stroke="#1a1a1a" stroke-width="0.4"/><rect x="793.8" y="250.4" width="6.8" height="2.2" fill="#d3d3c2"/><path d="M791.0 260.5 h12.4 v7.8 h-2.3 l-1.7 3 h-4.4 l-1.7 -3 h-2.3 z" fill="#1f4297" stroke="#1a1a1a" stroke-width="0.5"/><rect x="793.8" y="261.0" width="6.8" height="2.4" fill="#d3d3c2"/><path d="M814.2 253.7 v-6.2 h1.8 l1.5 -3.8 h4.6 l1.5 3.8 h1.8 v6.2 z" fill="#0b8a0d" stroke="#1a1a1a" stroke-width="0.4"/><rect x="816.4" y="250.4" width="6.8" height="2.2" fill="#d3d3c2"/><path d="M813.6 260.5 h12.4 v7.8 h-2.3 l-1.7 3 h-4.4 l-1.7 -3 h-2.3 z" fill="#1f4297" stroke="#1a1a1a" stroke-width="0.5"/><rect x="816.4" y="261.0" width="6.8" height="2.4" fill="#d3d3c2"/><path d="M836.8 253.7 v-6.2 h1.8 l1.5 -3.8 h4.6 l1.5 3.8 h1.8 v6.2 z" fill="#0b8a0d" stroke="#1a1a1a" stroke-width="0.4"/><rect x="839.0" y="250.4" width="6.8" height="2.2" fill="#d3d3c2"/><path d="M836.2 260.5 h12.4 v7.8 h-2.3 l-1.7 3 h-4.4 l-1.7 -3 h-2.3 z" fill="#1f4297" stroke="#1a1a1a" stroke-width="0.5"/><rect x="839.0" y="261.0" width="6.8" height="2.4" fill="#d3d3c2"/><path d="M867.2 253.7 v-6.2 h1.8 l1.5 -3.8 h4.6 l1.5 3.8 h1.8 v6.2 z" fill="#0b8a0d" stroke="#1a1a1a" stroke-width="0.4"/><rect x="869.4" y="250.4" width="6.8" height="2.2" fill="#d3d3c2"/><path d="M866.6 260.5 h12.4 v7.8 h-2.3 l-1.7 3 h-4.4 l-1.7 -3 h-2.3 z" fill="#1f4297" stroke="#1a1a1a" stroke-width="0.5"/><rect x="869.4" y="261.0" width="6.8" height="2.4" fill="#d3d3c2"/><path d="M889.8 253.7 v-6.2 h1.8 l1.5 -3.8 h4.6 l1.5 3.8 h1.8 v6.2 z" fill="#1f4297" stroke="#1a1a1a" stroke-width="0.4"/><rect x="892.0" y="250.4" width="6.8" height="2.2" fill="#d3d3c2"/><path d="M889.2 260.5 h12.4 v7.8 h-2.3 l-1.7 3 h-4.4 l-1.7 -3 h-2.3 z" fill="#1f4297" stroke="#1a1a1a" stroke-width="0.5"/><rect x="892.0" y="261.0" width="6.8" height="2.4" fill="#d3d3c2"/><path d="M912.4 253.7 v-6.2 h1.8 l1.5 -3.8 h4.6 l1.5 3.8 h1.8 v6.2 z" fill="#1f4297" stroke="#1a1a1a" stroke-width="0.4"/><rect x="914.6" y="250.4" width="6.8" height="2.2" fill="#d3d3c2"/><path d="M911.8 260.5 h12.4 v7.8 h-2.3 l-1.7 3 h-4.4 l-1.7 -3 h-2.3 z" fill="#1f4297" stroke="#1a1a1a" stroke-width="0.5"/><rect x="914.6" y="261.0" width="6.8" height="2.4" fill="#d3d3c2"/><path d="M935.0 253.7 v-6.2 h1.8 l1.5 -3.8 h4.6 l1.5 3.8 h1.8 v6.2 z" fill="#1f4297" stroke="#1a1a1a" stroke-width="0.4"/><rect x="937.2" y="250.4" width="6.8" height="2.2" fill="#d3d3c2"/><path d="M934.4 260.5 h12.4 v7.8 h-2.3 l-1.7 3 h-4.4 l-1.7 -3 h-2.3 z" fill="#1f4297" stroke="#1a1a1a" stroke-width="0.5"/><rect x="937.2" y="261.0" width="6.8" height="2.4" fill="#d3d3c2"/><path d="M957.6 253.7 v-6.2 h1.8 l1.5 -3.8 h4.6 l1.5 3.8 h1.8 v6.2 z" fill="#1f4297" stroke="#1a1a1a" stroke-width="0.4"/><rect x="959.8" y="250.4" width="6.8" height="2.2" fill="#d3d3c2"/><path d="M957.0 260.5 h12.4 v7.8 h-2.3 l-1.7 3 h-4.4 l-1.7 -3 h-2.3 z" fill="#1f4297" stroke="#1a1a1a" stroke-width="0.5"/><rect x="959.8" y="261.0" width="6.8" height="2.4" fill="#d3d3c2"/><path d="M980.2 253.7 v-6.2 h1.8 l1.5 -3.8 h4.6 l1.5 3.8 h1.8 v6.2 z" fill="#1f4297" stroke="#1a1a1a" stroke-width="0.4"/><rect x="982.4" y="250.4" width="6.8" height="2.2" fill="#d3d3c2"/><path d="M979.6 260.5 h12.4 v7.8 h-2.3 l-1.7 3 h-4.4 l-1.7 -3 h-2.3 z" fill="#1f4297" stroke="#1a1a1a" stroke-width="0.5"/><rect x="982.4" y="261.0" width="6.8" height="2.4" fill="#d3d3c2"/><path d="M1009.4 253.7 v-6.2 h1.8 l1.5 -3.8 h4.6 l1.5 3.8 h1.8 v6.2 z" fill="#1f4297" stroke="#1a1a1a" stroke-width="0.4"/><rect x="1011.6" y="250.4" width="6.8" height="2.2" fill="#d3d3c2"/><path d="M1008.8 260.5 h12.4 v7.8 h-2.3 l-1.7 3 h-4.4 l-1.7 -3 h-2.3 z" fill="#1f4297" stroke="#1a1a1a" stroke-width="0.5"/><rect x="1011.6" y="261.0" width="6.8" height="2.4" fill="#d3d3c2"/><path d="M1032.0 253.7 v-6.2 h1.8 l1.5 -3.8 h4.6 l1.5 3.8 h1.8 v6.2 z" fill="#1f4297" stroke="#1a1a1a" stroke-width="0.4"/><rect x="1034.2" y="250.4" width="6.8" height="2.2" fill="#d3d3c2"/><path d="M1031.4 260.5 h12.4 v7.8 h-2.3 l-1.7 3 h-4.4 l-1.7 -3 h-2.3 z" fill="#1f4297" stroke="#1a1a1a" stroke-width="0.5"/><rect x="1034.2" y="261.0" width="6.8" height="2.4" fill="#d3d3c2"/><path d="M1054.6 253.7 v-6.2 h1.8 l1.5 -3.8 h4.6 l1.5 3.8 h1.8 v6.2 z" fill="#1f4297" stroke="#1a1a1a" stroke-width="0.4"/><rect x="1056.8" y="250.4" width="6.8" height="2.2" fill="#d3d3c2"/><path d="M1054.0 260.5 h12.4 v7.8 h-2.3 l-1.7 3 h-4.4 l-1.7 -3 h-2.3 z" fill="#1f4297" stroke="#1a1a1a" stroke-width="0.5"/><rect x="1056.8" y="261.0" width="6.8" height="2.4" fill="#d3d3c2"/><path d="M1077.2 253.7 v-6.2 h1.8 l1.5 -3.8 h4.6 l1.5 3.8 h1.8 v6.2 z" fill="#1f4297" stroke="#1a1a1a" stroke-width="0.4"/><rect x="1079.4" y="250.4" width="6.8" height="2.2" fill="#d3d3c2"/><path d="M1076.6 260.5 h12.4 v7.8 h-2.3 l-1.7 3 h-4.4 l-1.7 -3 h-2.3 z" fill="#1f4297" stroke="#1a1a1a" stroke-width="0.5"/><rect x="1079.4" y="261.0" width="6.8" height="2.4" fill="#d3d3c2"/><path d="M1099.8 253.7 v-6.2 h1.8 l1.5 -3.8 h4.6 l1.5 3.8 h1.8 v6.2 z" fill="#1f4297" stroke="#1a1a1a" stroke-width="0.4"/><rect x="1102.0" y="250.4" width="6.8" height="2.2" fill="#d3d3c2"/><path d="M1099.2 260.5 h12.4 v7.8 h-2.3 l-1.7 3 h-4.4 l-1.7 -3 h-2.3 z" fill="#1f4297" stroke="#1a1a1a" stroke-width="0.5"/><rect x="1102.0" y="261.0" width="6.8" height="2.4" fill="#d3d3c2"/><path d="M1122.4 253.7 v-6.2 h1.8 l1.5 -3.8 h4.6 l1.5 3.8 h1.8 v6.2 z" fill="#1f4297" stroke="#1a1a1a" stroke-width="0.4"/><rect x="1124.6" y="250.4" width="6.8" height="2.2" fill="#d3d3c2"/><path d="M1121.8 260.5 h12.4 v7.8 h-2.3 l-1.7 3 h-4.4 l-1.7 -3 h-2.3 z" fill="#1f4297" stroke="#1a1a1a" stroke-width="0.5"/><rect x="1124.6" y="261.0" width="6.8" height="2.4" fill="#d3d3c2"/><path d="M551.5 461.8 h12.4 v7.8 h-2.3 l-1.7 3 h-4.4 l-1.7 -3 h-2.3 z" fill="#0b8a0d" stroke="#1a1a1a" stroke-width="0.5"/><rect x="554.3" y="462.2" width="6.8" height="2.4" fill="#d3d3c2"/><path d="M581.7 461.8 h12.4 v7.8 h-2.3 l-1.7 3 h-4.4 l-1.7 -3 h-2.3 z" fill="#1f4297" stroke="#1a1a1a" stroke-width="0.5"/><rect x="584.5" y="462.2" width="6.8" height="2.4" fill="#d3d3c2"/><path d="M611.8 461.8 h12.4 v7.8 h-2.3 l-1.7 3 h-4.4 l-1.7 -3 h-2.3 z" fill="#0b8a0d" stroke="#1a1a1a" stroke-width="0.5"/><rect x="614.6" y="462.2" width="6.8" height="2.4" fill="#d3d3c2"/><path d="M642.0 461.8 h12.4 v7.8 h-2.3 l-1.7 3 h-4.4 l-1.7 -3 h-2.3 z" fill="#1f4297" stroke="#1a1a1a" stroke-width="0.5"/><rect x="644.8" y="462.2" width="6.8" height="2.4" fill="#d3d3c2"/><path d="M672.1 461.8 h12.4 v7.8 h-2.3 l-1.7 3 h-4.4 l-1.7 -3 h-2.3 z" fill="#0b8a0d" stroke="#1a1a1a" stroke-width="0.5"/><rect x="674.9" y="462.2" width="6.8" height="2.4" fill="#d3d3c2"/><path d="M702.3 461.8 h12.4 v7.8 h-2.3 l-1.7 3 h-4.4 l-1.7 -3 h-2.3 z" fill="#1f4297" stroke="#1a1a1a" stroke-width="0.5"/><rect x="705.1" y="462.2" width="6.8" height="2.4" fill="#d3d3c2"/><path d="M732.5 461.8 h12.4 v7.8 h-2.3 l-1.7 3 h-4.4 l-1.7 -3 h-2.3 z" fill="#0b8a0d" stroke="#1a1a1a" stroke-width="0.5"/><rect x="735.3" y="462.2" width="6.8" height="2.4" fill="#d3d3c2"/><path d="M762.6 461.8 h12.4 v7.8 h-2.3 l-1.7 3 h-4.4 l-1.7 -3 h-2.3 z" fill="#1f4297" stroke="#1a1a1a" stroke-width="0.5"/><rect x="765.4" y="462.2" width="6.8" height="2.4" fill="#d3d3c2"/><path d="M792.8 461.8 h12.4 v7.8 h-2.3 l-1.7 3 h-4.4 l-1.7 -3 h-2.3 z" fill="#0b8a0d" stroke="#1a1a1a" stroke-width="0.5"/><rect x="795.6" y="462.2" width="6.8" height="2.4" fill="#d3d3c2"/><path d="M822.9 461.8 h12.4 v7.8 h-2.3 l-1.7 3 h-4.4 l-1.7 -3 h-2.3 z" fill="#1f4297" stroke="#1a1a1a" stroke-width="0.5"/><rect x="825.7" y="462.2" width="6.8" height="2.4" fill="#d3d3c2"/><path d="M853.1 461.8 h12.4 v7.8 h-2.3 l-1.7 3 h-4.4 l-1.7 -3 h-2.3 z" fill="#0b8a0d" stroke="#1a1a1a" stroke-width="0.5"/><rect x="855.9" y="462.2" width="6.8" height="2.4" fill="#d3d3c2"/><path d="M883.3 461.8 h12.4 v7.8 h-2.3 l-1.7 3 h-4.4 l-1.7 -3 h-2.3 z" fill="#1f4297" stroke="#1a1a1a" stroke-width="0.5"/><rect x="886.1" y="462.2" width="6.8" height="2.4" fill="#d3d3c2"/><path d="M913.4 461.8 h12.4 v7.8 h-2.3 l-1.7 3 h-4.4 l-1.7 -3 h-2.3 z" fill="#0b8a0d" stroke="#1a1a1a" stroke-width="0.5"/><rect x="916.2" y="462.2" width="6.8" height="2.4" fill="#d3d3c2"/><path d="M943.6 461.8 h12.4 v7.8 h-2.3 l-1.7 3 h-4.4 l-1.7 -3 h-2.3 z" fill="#1f4297" stroke="#1a1a1a" stroke-width="0.5"/><rect x="946.4" y="462.2" width="6.8" height="2.4" fill="#d3d3c2"/><path d="M973.7 461.8 h12.4 v7.8 h-2.3 l-1.7 3 h-4.4 l-1.7 -3 h-2.3 z" fill="#0b8a0d" stroke="#1a1a1a" stroke-width="0.5"/><rect x="976.5" y="462.2" width="6.8" height="2.4" fill="#d3d3c2"/><path d="M1003.9 461.8 h12.4 v7.8 h-2.3 l-1.7 3 h-4.4 l-1.7 -3 h-2.3 z" fill="#1f4297" stroke="#1a1a1a" stroke-width="0.5"/><rect x="1006.7" y="462.2" width="6.8" height="2.4" fill="#d3d3c2"/><path d="M1034.1 461.8 h12.4 v7.8 h-2.3 l-1.7 3 h-4.4 l-1.7 -3 h-2.3 z" fill="#0b8a0d" stroke="#1a1a1a" stroke-width="0.5"/><rect x="1036.9" y="462.2" width="6.8" height="2.4" fill="#d3d3c2"/><path d="M1064.2 461.8 h12.4 v7.8 h-2.3 l-1.7 3 h-4.4 l-1.7 -3 h-2.3 z" fill="#1f4297" stroke="#1a1a1a" stroke-width="0.5"/><rect x="1067.0" y="462.2" width="6.8" height="2.4" fill="#d3d3c2"/><path d="M1094.4 461.8 h12.4 v7.8 h-2.3 l-1.7 3 h-4.4 l-1.7 -3 h-2.3 z" fill="#0b8a0d" stroke="#1a1a1a" stroke-width="0.5"/><rect x="1097.2" y="462.2" width="6.8" height="2.4" fill="#d3d3c2"/><path d="M1124.5 461.8 h12.4 v7.8 h-2.3 l-1.7 3 h-4.4 l-1.7 -3 h-2.3 z" fill="#1f4297" stroke="#1a1a1a" stroke-width="0.5"/><rect x="1127.3" y="462.2" width="6.8" height="2.4" fill="#d3d3c2"/><path d="M1154.7 461.8 h12.4 v7.8 h-2.3 l-1.7 3 h-4.4 l-1.7 -3 h-2.3 z" fill="#0b8a0d" stroke="#1a1a1a" stroke-width="0.5"/><rect x="1157.5" y="462.2" width="6.8" height="2.4" fill="#d3d3c2"/><path d="M1184.9 461.8 h12.4 v7.8 h-2.3 l-1.7 3 h-4.4 l-1.7 -3 h-2.3 z" fill="#1f4297" stroke="#1a1a1a" stroke-width="0.5"/><rect x="1187.7" y="462.2" width="6.8" height="2.4" fill="#d3d3c2"/><path d="M1215.0 461.8 h12.4 v7.8 h-2.3 l-1.7 3 h-4.4 l-1.7 -3 h-2.3 z" fill="#0b8a0d" stroke="#1a1a1a" stroke-width="0.5"/><rect x="1217.8" y="462.2" width="6.8" height="2.4" fill="#d3d3c2"/><path d="M1245.2 461.8 h12.4 v7.8 h-2.3 l-1.7 3 h-4.4 l-1.7 -3 h-2.3 z" fill="#1f4297" stroke="#1a1a1a" stroke-width="0.5"/><rect x="1248.0" y="462.2" width="6.8" height="2.4" fill="#d3d3c2"/><path d="M551.5 531.8 h12.4 v7.8 h-2.3 l-1.7 3 h-4.4 l-1.7 -3 h-2.3 z" fill="#0b8a0d" stroke="#1a1a1a" stroke-width="0.5"/><rect x="554.3" y="532.3" width="6.8" height="2.4" fill="#d3d3c2"/><path d="M581.7 531.8 h12.4 v7.8 h-2.3 l-1.7 3 h-4.4 l-1.7 -3 h-2.3 z" fill="#0b8a0d" stroke="#1a1a1a" stroke-width="0.5"/><rect x="584.5" y="532.3" width="6.8" height="2.4" fill="#d3d3c2"/><path d="M611.8 531.8 h12.4 v7.8 h-2.3 l-1.7 3 h-4.4 l-1.7 -3 h-2.3 z" fill="#0b8a0d" stroke="#1a1a1a" stroke-width="0.5"/><rect x="614.6" y="532.3" width="6.8" height="2.4" fill="#d3d3c2"/><path d="M642.0 531.8 h12.4 v7.8 h-2.3 l-1.7 3 h-4.4 l-1.7 -3 h-2.3 z" fill="#0b8a0d" stroke="#1a1a1a" stroke-width="0.5"/><rect x="644.8" y="532.3" width="6.8" height="2.4" fill="#d3d3c2"/><path d="M672.1 531.8 h12.4 v7.8 h-2.3 l-1.7 3 h-4.4 l-1.7 -3 h-2.3 z" fill="#0b8a0d" stroke="#1a1a1a" stroke-width="0.5"/><rect x="674.9" y="532.3" width="6.8" height="2.4" fill="#d3d3c2"/><path d="M702.3 531.8 h12.4 v7.8 h-2.3 l-1.7 3 h-4.4 l-1.7 -3 h-2.3 z" fill="#0b8a0d" stroke="#1a1a1a" stroke-width="0.5"/><rect x="705.1" y="532.3" width="6.8" height="2.4" fill="#d3d3c2"/><path d="M732.5 531.8 h12.4 v7.8 h-2.3 l-1.7 3 h-4.4 l-1.7 -3 h-2.3 z" fill="#0b8a0d" stroke="#1a1a1a" stroke-width="0.5"/><rect x="735.3" y="532.3" width="6.8" height="2.4" fill="#d3d3c2"/><path d="M762.6 531.8 h12.4 v7.8 h-2.3 l-1.7 3 h-4.4 l-1.7 -3 h-2.3 z" fill="#0b8a0d" stroke="#1a1a1a" stroke-width="0.5"/><rect x="765.4" y="532.3" width="6.8" height="2.4" fill="#d3d3c2"/><path d="M792.8 531.8 h12.4 v7.8 h-2.3 l-1.7 3 h-4.4 l-1.7 -3 h-2.3 z" fill="#0b8a0d" stroke="#1a1a1a" stroke-width="0.5"/><rect x="795.6" y="532.3" width="6.8" height="2.4" fill="#d3d3c2"/><path d="M822.9 531.8 h12.4 v7.8 h-2.3 l-1.7 3 h-4.4 l-1.7 -3 h-2.3 z" fill="#0b8a0d" stroke="#1a1a1a" stroke-width="0.5"/><rect x="825.7" y="532.3" width="6.8" height="2.4" fill="#d3d3c2"/><path d="M853.1 531.8 h12.4 v7.8 h-2.3 l-1.7 3 h-4.4 l-1.7 -3 h-2.3 z" fill="#454545" stroke="#1a1a1a" stroke-width="0.5"/><rect x="855.9" y="532.3" width="6.8" height="2.4" fill="#d3d3c2"/><path d="M883.3 531.8 h12.4 v7.8 h-2.3 l-1.7 3 h-4.4 l-1.7 -3 h-2.3 z" fill="#454545" stroke="#1a1a1a" stroke-width="0.5"/><rect x="886.1" y="532.3" width="6.8" height="2.4" fill="#d3d3c2"/><path d="M913.4 531.8 h12.4 v7.8 h-2.3 l-1.7 3 h-4.4 l-1.7 -3 h-2.3 z" fill="#454545" stroke="#1a1a1a" stroke-width="0.5"/><rect x="916.2" y="532.3" width="6.8" height="2.4" fill="#d3d3c2"/><path d="M943.6 531.8 h12.4 v7.8 h-2.3 l-1.7 3 h-4.4 l-1.7 -3 h-2.3 z" fill="#454545" stroke="#1a1a1a" stroke-width="0.5"/><rect x="946.4" y="532.3" width="6.8" height="2.4" fill="#d3d3c2"/><path d="M973.7 531.8 h12.4 v7.8 h-2.3 l-1.7 3 h-4.4 l-1.7 -3 h-2.3 z" fill="#454545" stroke="#1a1a1a" stroke-width="0.5"/><rect x="976.5" y="532.3" width="6.8" height="2.4" fill="#d3d3c2"/><path d="M1003.9 531.8 h12.4 v7.8 h-2.3 l-1.7 3 h-4.4 l-1.7 -3 h-2.3 z" fill="#454545" stroke="#1a1a1a" stroke-width="0.5"/><rect x="1006.7" y="532.3" width="6.8" height="2.4" fill="#d3d3c2"/><path d="M1034.1 531.8 h12.4 v7.8 h-2.3 l-1.7 3 h-4.4 l-1.7 -3 h-2.3 z" fill="#454545" stroke="#1a1a1a" stroke-width="0.5"/><rect x="1036.9" y="532.3" width="6.8" height="2.4" fill="#d3d3c2"/><path d="M1064.2 531.8 h12.4 v7.8 h-2.3 l-1.7 3 h-4.4 l-1.7 -3 h-2.3 z" fill="#454545" stroke="#1a1a1a" stroke-width="0.5"/><rect x="1067.0" y="532.3" width="6.8" height="2.4" fill="#d3d3c2"/><path d="M1094.4 531.8 h12.4 v7.8 h-2.3 l-1.7 3 h-4.4 l-1.7 -3 h-2.3 z" fill="#454545" stroke="#1a1a1a" stroke-width="0.5"/><rect x="1097.2" y="532.3" width="6.8" height="2.4" fill="#d3d3c2"/><path d="M1124.5 531.8 h12.4 v7.8 h-2.3 l-1.7 3 h-4.4 l-1.7 -3 h-2.3 z" fill="#454545" stroke="#1a1a1a" stroke-width="0.5"/><rect x="1127.3" y="532.3" width="6.8" height="2.4" fill="#d3d3c2"/><path d="M1154.7 531.8 h12.4 v7.8 h-2.3 l-1.7 3 h-4.4 l-1.7 -3 h-2.3 z" fill="#454545" stroke="#1a1a1a" stroke-width="0.5"/><rect x="1157.5" y="532.3" width="6.8" height="2.4" fill="#d3d3c2"/><path d="M1184.9 531.8 h12.4 v7.8 h-2.3 l-1.7 3 h-4.4 l-1.7 -3 h-2.3 z" fill="#454545" stroke="#1a1a1a" stroke-width="0.5"/><rect x="1187.7" y="532.3" width="6.8" height="2.4" fill="#d3d3c2"/><path d="M1215.0 531.8 h12.4 v7.8 h-2.3 l-1.7 3 h-4.4 l-1.7 -3 h-2.3 z" fill="#454545" stroke="#1a1a1a" stroke-width="0.5"/><rect x="1217.8" y="532.3" width="6.8" height="2.4" fill="#d3d3c2"/><path d="M1245.2 531.8 h12.4 v7.8 h-2.3 l-1.7 3 h-4.4 l-1.7 -3 h-2.3 z" fill="#454545" stroke="#1a1a1a" stroke-width="0.5"/><rect x="1248.0" y="532.3" width="6.8" height="2.4" fill="#d3d3c2"/><path d="M602.1 675.9 h12.4 v7.8 h-2.3 l-1.7 3 h-4.4 l-1.7 -3 h-2.3 z" fill="#0b8a0d" stroke="#1a1a1a" stroke-width="0.5"/><rect x="604.9" y="676.4" width="6.8" height="2.4" fill="#d3d3c2"/><path d="M627.0 675.9 h12.4 v7.8 h-2.3 l-1.7 3 h-4.4 l-1.7 -3 h-2.3 z" fill="#1f4297" stroke="#1a1a1a" stroke-width="0.5"/><rect x="629.8" y="676.4" width="6.8" height="2.4" fill="#d3d3c2"/><path d="M651.8 675.9 h12.4 v7.8 h-2.3 l-1.7 3 h-4.4 l-1.7 -3 h-2.3 z" fill="#0b8a0d" stroke="#1a1a1a" stroke-width="0.5"/><rect x="654.6" y="676.4" width="6.8" height="2.4" fill="#d3d3c2"/><path d="M676.7 675.9 h12.4 v7.8 h-2.3 l-1.7 3 h-4.4 l-1.7 -3 h-2.3 z" fill="#1f4297" stroke="#1a1a1a" stroke-width="0.5"/><rect x="679.5" y="676.4" width="6.8" height="2.4" fill="#d3d3c2"/><path d="M701.6 675.9 h12.4 v7.8 h-2.3 l-1.7 3 h-4.4 l-1.7 -3 h-2.3 z" fill="#0b8a0d" stroke="#1a1a1a" stroke-width="0.5"/><rect x="704.4" y="676.4" width="6.8" height="2.4" fill="#d3d3c2"/><path d="M726.4 675.9 h12.4 v7.8 h-2.3 l-1.7 3 h-4.4 l-1.7 -3 h-2.3 z" fill="#1f4297" stroke="#1a1a1a" stroke-width="0.5"/><rect x="729.2" y="676.4" width="6.8" height="2.4" fill="#d3d3c2"/><path d="M751.3 675.9 h12.4 v7.8 h-2.3 l-1.7 3 h-4.4 l-1.7 -3 h-2.3 z" fill="#0b8a0d" stroke="#1a1a1a" stroke-width="0.5"/><rect x="754.1" y="676.4" width="6.8" height="2.4" fill="#d3d3c2"/><path d="M776.2 675.9 h12.4 v7.8 h-2.3 l-1.7 3 h-4.4 l-1.7 -3 h-2.3 z" fill="#1f4297" stroke="#1a1a1a" stroke-width="0.5"/><rect x="779.0" y="676.4" width="6.8" height="2.4" fill="#d3d3c2"/><path d="M801.1 675.9 h12.4 v7.8 h-2.3 l-1.7 3 h-4.4 l-1.7 -3 h-2.3 z" fill="#0b8a0d" stroke="#1a1a1a" stroke-width="0.5"/><rect x="803.9" y="676.4" width="6.8" height="2.4" fill="#d3d3c2"/><path d="M825.9 675.9 h12.4 v7.8 h-2.3 l-1.7 3 h-4.4 l-1.7 -3 h-2.3 z" fill="#1f4297" stroke="#1a1a1a" stroke-width="0.5"/><rect x="828.7" y="676.4" width="6.8" height="2.4" fill="#d3d3c2"/><path d="M850.8 675.9 h12.4 v7.8 h-2.3 l-1.7 3 h-4.4 l-1.7 -3 h-2.3 z" fill="#0b8a0d" stroke="#1a1a1a" stroke-width="0.5"/><rect x="853.6" y="676.4" width="6.8" height="2.4" fill="#d3d3c2"/><path d="M875.7 675.9 h12.4 v7.8 h-2.3 l-1.7 3 h-4.4 l-1.7 -3 h-2.3 z" fill="#1f4297" stroke="#1a1a1a" stroke-width="0.5"/><rect x="878.5" y="676.4" width="6.8" height="2.4" fill="#d3d3c2"/><path d="M900.5 675.9 h12.4 v7.8 h-2.3 l-1.7 3 h-4.4 l-1.7 -3 h-2.3 z" fill="#0b8a0d" stroke="#1a1a1a" stroke-width="0.5"/><rect x="903.3" y="676.4" width="6.8" height="2.4" fill="#d3d3c2"/><path d="M925.4 675.9 h12.4 v7.8 h-2.3 l-1.7 3 h-4.4 l-1.7 -3 h-2.3 z" fill="#1f4297" stroke="#1a1a1a" stroke-width="0.5"/><rect x="928.2" y="676.4" width="6.8" height="2.4" fill="#d3d3c2"/><path d="M950.3 675.9 h12.4 v7.8 h-2.3 l-1.7 3 h-4.4 l-1.7 -3 h-2.3 z" fill="#0b8a0d" stroke="#1a1a1a" stroke-width="0.5"/><rect x="953.1" y="676.4" width="6.8" height="2.4" fill="#d3d3c2"/><path d="M975.1 675.9 h12.4 v7.8 h-2.3 l-1.7 3 h-4.4 l-1.7 -3 h-2.3 z" fill="#1f4297" stroke="#1a1a1a" stroke-width="0.5"/><rect x="977.9" y="676.4" width="6.8" height="2.4" fill="#d3d3c2"/><path d="M1000.0 675.9 h12.4 v7.8 h-2.3 l-1.7 3 h-4.4 l-1.7 -3 h-2.3 z" fill="#0b8a0d" stroke="#1a1a1a" stroke-width="0.5"/><rect x="1002.8" y="676.4" width="6.8" height="2.4" fill="#d3d3c2"/><path d="M1024.9 675.9 h12.4 v7.8 h-2.3 l-1.7 3 h-4.4 l-1.7 -3 h-2.3 z" fill="#1f4297" stroke="#1a1a1a" stroke-width="0.5"/><rect x="1027.7" y="676.4" width="6.8" height="2.4" fill="#d3d3c2"/><path d="M1049.8 675.9 h12.4 v7.8 h-2.3 l-1.7 3 h-4.4 l-1.7 -3 h-2.3 z" fill="#0b8a0d" stroke="#1a1a1a" stroke-width="0.5"/><rect x="1052.6" y="676.4" width="6.8" height="2.4" fill="#d3d3c2"/><path d="M1074.6 675.9 h12.4 v7.8 h-2.3 l-1.7 3 h-4.4 l-1.7 -3 h-2.3 z" fill="#1f4297" stroke="#1a1a1a" stroke-width="0.5"/><rect x="1077.4" y="676.4" width="6.8" height="2.4" fill="#d3d3c2"/><path d="M1099.5 675.9 h12.4 v7.8 h-2.3 l-1.7 3 h-4.4 l-1.7 -3 h-2.3 z" fill="#0b8a0d" stroke="#1a1a1a" stroke-width="0.5"/><rect x="1102.3" y="676.4" width="6.8" height="2.4" fill="#d3d3c2"/><path d="M1124.4 675.9 h12.4 v7.8 h-2.3 l-1.7 3 h-4.4 l-1.7 -3 h-2.3 z" fill="#1f4297" stroke="#1a1a1a" stroke-width="0.5"/><rect x="1127.2" y="676.4" width="6.8" height="2.4" fill="#d3d3c2"/><path d="M1149.2 675.9 h12.4 v7.8 h-2.3 l-1.7 3 h-4.4 l-1.7 -3 h-2.3 z" fill="#0b8a0d" stroke="#1a1a1a" stroke-width="0.5"/><rect x="1152.0" y="676.4" width="6.8" height="2.4" fill="#d3d3c2"/><path d="M1174.1 675.9 h12.4 v7.8 h-2.3 l-1.7 3 h-4.4 l-1.7 -3 h-2.3 z" fill="#1f4297" stroke="#1a1a1a" stroke-width="0.5"/><rect x="1176.9" y="676.4" width="6.8" height="2.4" fill="#d3d3c2"/><path d="M1199.0 675.9 h12.4 v7.8 h-2.3 l-1.7 3 h-4.4 l-1.7 -3 h-2.3 z" fill="#454545" stroke="#1a1a1a" stroke-width="0.5"/><rect x="1201.8" y="676.4" width="6.8" height="2.4" fill="#d3d3c2"/><path d="M602.1 745.8 h12.4 v7.8 h-2.3 l-1.7 3 h-4.4 l-1.7 -3 h-2.3 z" fill="#454545" stroke="#1a1a1a" stroke-width="0.5"/><rect x="604.9" y="746.3" width="6.8" height="2.4" fill="#d3d3c2"/><path d="M627.0 745.8 h12.4 v7.8 h-2.3 l-1.7 3 h-4.4 l-1.7 -3 h-2.3 z" fill="#454545" stroke="#1a1a1a" stroke-width="0.5"/><rect x="629.8" y="746.3" width="6.8" height="2.4" fill="#d3d3c2"/><path d="M651.8 745.8 h12.4 v7.8 h-2.3 l-1.7 3 h-4.4 l-1.7 -3 h-2.3 z" fill="#454545" stroke="#1a1a1a" stroke-width="0.5"/><rect x="654.6" y="746.3" width="6.8" height="2.4" fill="#d3d3c2"/><path d="M676.7 745.8 h12.4 v7.8 h-2.3 l-1.7 3 h-4.4 l-1.7 -3 h-2.3 z" fill="#454545" stroke="#1a1a1a" stroke-width="0.5"/><rect x="679.5" y="746.3" width="6.8" height="2.4" fill="#d3d3c2"/><path d="M701.6 745.8 h12.4 v7.8 h-2.3 l-1.7 3 h-4.4 l-1.7 -3 h-2.3 z" fill="#454545" stroke="#1a1a1a" stroke-width="0.5"/><rect x="704.4" y="746.3" width="6.8" height="2.4" fill="#d3d3c2"/><path d="M726.4 745.8 h12.4 v7.8 h-2.3 l-1.7 3 h-4.4 l-1.7 -3 h-2.3 z" fill="#454545" stroke="#1a1a1a" stroke-width="0.5"/><rect x="729.2" y="746.3" width="6.8" height="2.4" fill="#d3d3c2"/><path d="M751.3 745.8 h12.4 v7.8 h-2.3 l-1.7 3 h-4.4 l-1.7 -3 h-2.3 z" fill="#454545" stroke="#1a1a1a" stroke-width="0.5"/><rect x="754.1" y="746.3" width="6.8" height="2.4" fill="#d3d3c2"/><path d="M776.2 745.8 h12.4 v7.8 h-2.3 l-1.7 3 h-4.4 l-1.7 -3 h-2.3 z" fill="#454545" stroke="#1a1a1a" stroke-width="0.5"/><rect x="779.0" y="746.3" width="6.8" height="2.4" fill="#d3d3c2"/><path d="M801.1 745.8 h12.4 v7.8 h-2.3 l-1.7 3 h-4.4 l-1.7 -3 h-2.3 z" fill="#454545" stroke="#1a1a1a" stroke-width="0.5"/><rect x="803.9" y="746.3" width="6.8" height="2.4" fill="#d3d3c2"/><path d="M825.9 745.8 h12.4 v7.8 h-2.3 l-1.7 3 h-4.4 l-1.7 -3 h-2.3 z" fill="#454545" stroke="#1a1a1a" stroke-width="0.5"/><rect x="828.7" y="746.3" width="6.8" height="2.4" fill="#d3d3c2"/><path d="M850.8 745.8 h12.4 v7.8 h-2.3 l-1.7 3 h-4.4 l-1.7 -3 h-2.3 z" fill="#454545" stroke="#1a1a1a" stroke-width="0.5"/><rect x="853.6" y="746.3" width="6.8" height="2.4" fill="#d3d3c2"/><path d="M875.7 745.8 h12.4 v7.8 h-2.3 l-1.7 3 h-4.4 l-1.7 -3 h-2.3 z" fill="#454545" stroke="#1a1a1a" stroke-width="0.5"/><rect x="878.5" y="746.3" width="6.8" height="2.4" fill="#d3d3c2"/><path d="M900.5 745.8 h12.4 v7.8 h-2.3 l-1.7 3 h-4.4 l-1.7 -3 h-2.3 z" fill="#454545" stroke="#1a1a1a" stroke-width="0.5"/><rect x="903.3" y="746.3" width="6.8" height="2.4" fill="#d3d3c2"/><path d="M925.4 745.8 h12.4 v7.8 h-2.3 l-1.7 3 h-4.4 l-1.7 -3 h-2.3 z" fill="#454545" stroke="#1a1a1a" stroke-width="0.5"/><rect x="928.2" y="746.3" width="6.8" height="2.4" fill="#d3d3c2"/><path d="M950.3 745.8 h12.4 v7.8 h-2.3 l-1.7 3 h-4.4 l-1.7 -3 h-2.3 z" fill="#454545" stroke="#1a1a1a" stroke-width="0.5"/><rect x="953.1" y="746.3" width="6.8" height="2.4" fill="#d3d3c2"/><path d="M975.1 745.8 h12.4 v7.8 h-2.3 l-1.7 3 h-4.4 l-1.7 -3 h-2.3 z" fill="#454545" stroke="#1a1a1a" stroke-width="0.5"/><rect x="977.9" y="746.3" width="6.8" height="2.4" fill="#d3d3c2"/><path d="M1000.0 745.8 h12.4 v7.8 h-2.3 l-1.7 3 h-4.4 l-1.7 -3 h-2.3 z" fill="#454545" stroke="#1a1a1a" stroke-width="0.5"/><rect x="1002.8" y="746.3" width="6.8" height="2.4" fill="#d3d3c2"/><path d="M1024.9 745.8 h12.4 v7.8 h-2.3 l-1.7 3 h-4.4 l-1.7 -3 h-2.3 z" fill="#454545" stroke="#1a1a1a" stroke-width="0.5"/><rect x="1027.7" y="746.3" width="6.8" height="2.4" fill="#d3d3c2"/><path d="M1049.8 745.8 h12.4 v7.8 h-2.3 l-1.7 3 h-4.4 l-1.7 -3 h-2.3 z" fill="#454545" stroke="#1a1a1a" stroke-width="0.5"/><rect x="1052.6" y="746.3" width="6.8" height="2.4" fill="#d3d3c2"/><path d="M1074.6 745.8 h12.4 v7.8 h-2.3 l-1.7 3 h-4.4 l-1.7 -3 h-2.3 z" fill="#454545" stroke="#1a1a1a" stroke-width="0.5"/><rect x="1077.4" y="746.3" width="6.8" height="2.4" fill="#d3d3c2"/><path d="M1099.5 745.8 h12.4 v7.8 h-2.3 l-1.7 3 h-4.4 l-1.7 -3 h-2.3 z" fill="#454545" stroke="#1a1a1a" stroke-width="0.5"/><rect x="1102.3" y="746.3" width="6.8" height="2.4" fill="#d3d3c2"/><path d="M1124.4 745.8 h12.4 v7.8 h-2.3 l-1.7 3 h-4.4 l-1.7 -3 h-2.3 z" fill="#454545" stroke="#1a1a1a" stroke-width="0.5"/><rect x="1127.2" y="746.3" width="6.8" height="2.4" fill="#d3d3c2"/><path d="M1149.2 745.8 h12.4 v7.8 h-2.3 l-1.7 3 h-4.4 l-1.7 -3 h-2.3 z" fill="#454545" stroke="#1a1a1a" stroke-width="0.5"/><rect x="1152.0" y="746.3" width="6.8" height="2.4" fill="#d3d3c2"/><path d="M1174.1 745.8 h12.4 v7.8 h-2.3 l-1.7 3 h-4.4 l-1.7 -3 h-2.3 z" fill="#454545" stroke="#1a1a1a" stroke-width="0.5"/><rect x="1176.9" y="746.3" width="6.8" height="2.4" fill="#d3d3c2"/><path d="M1199.0 745.8 h12.4 v7.8 h-2.3 l-1.7 3 h-4.4 l-1.7 -3 h-2.3 z" fill="#454545" stroke="#1a1a1a" stroke-width="0.5"/><rect x="1201.8" y="746.3" width="6.8" height="2.4" fill="#d3d3c2"/><path d="M602.1 955.5 h12.4 v7.8 h-2.3 l-1.7 3 h-4.4 l-1.7 -3 h-2.3 z" fill="#0b8a0d" stroke="#1a1a1a" stroke-width="0.5"/><rect x="604.9" y="956.0" width="6.8" height="2.4" fill="#d3d3c2"/><path d="M627.0 955.5 h12.4 v7.8 h-2.3 l-1.7 3 h-4.4 l-1.7 -3 h-2.3 z" fill="#0b8a0d" stroke="#1a1a1a" stroke-width="0.5"/><rect x="629.8" y="956.0" width="6.8" height="2.4" fill="#d3d3c2"/><path d="M651.8 955.5 h12.4 v7.8 h-2.3 l-1.7 3 h-4.4 l-1.7 -3 h-2.3 z" fill="#0b8a0d" stroke="#1a1a1a" stroke-width="0.5"/><rect x="654.6" y="956.0" width="6.8" height="2.4" fill="#d3d3c2"/><path d="M676.7 955.5 h12.4 v7.8 h-2.3 l-1.7 3 h-4.4 l-1.7 -3 h-2.3 z" fill="#0b8a0d" stroke="#1a1a1a" stroke-width="0.5"/><rect x="679.5" y="956.0" width="6.8" height="2.4" fill="#d3d3c2"/><path d="M701.6 955.5 h12.4 v7.8 h-2.3 l-1.7 3 h-4.4 l-1.7 -3 h-2.3 z" fill="#0b8a0d" stroke="#1a1a1a" stroke-width="0.5"/><rect x="704.4" y="956.0" width="6.8" height="2.4" fill="#d3d3c2"/><path d="M726.4 955.5 h12.4 v7.8 h-2.3 l-1.7 3 h-4.4 l-1.7 -3 h-2.3 z" fill="#0b8a0d" stroke="#1a1a1a" stroke-width="0.5"/><rect x="729.2" y="956.0" width="6.8" height="2.4" fill="#d3d3c2"/><path d="M751.3 955.5 h12.4 v7.8 h-2.3 l-1.7 3 h-4.4 l-1.7 -3 h-2.3 z" fill="#0b8a0d" stroke="#1a1a1a" stroke-width="0.5"/><rect x="754.1" y="956.0" width="6.8" height="2.4" fill="#d3d3c2"/><path d="M776.2 955.5 h12.4 v7.8 h-2.3 l-1.7 3 h-4.4 l-1.7 -3 h-2.3 z" fill="#0b8a0d" stroke="#1a1a1a" stroke-width="0.5"/><rect x="779.0" y="956.0" width="6.8" height="2.4" fill="#d3d3c2"/><path d="M801.1 955.5 h12.4 v7.8 h-2.3 l-1.7 3 h-4.4 l-1.7 -3 h-2.3 z" fill="#0b8a0d" stroke="#1a1a1a" stroke-width="0.5"/><rect x="803.9" y="956.0" width="6.8" height="2.4" fill="#d3d3c2"/><path d="M825.9 955.5 h12.4 v7.8 h-2.3 l-1.7 3 h-4.4 l-1.7 -3 h-2.3 z" fill="#0b8a0d" stroke="#1a1a1a" stroke-width="0.5"/><rect x="828.7" y="956.0" width="6.8" height="2.4" fill="#d3d3c2"/><path d="M850.8 955.5 h12.4 v7.8 h-2.3 l-1.7 3 h-4.4 l-1.7 -3 h-2.3 z" fill="#0b8a0d" stroke="#1a1a1a" stroke-width="0.5"/><rect x="853.6" y="956.0" width="6.8" height="2.4" fill="#d3d3c2"/><path d="M875.7 955.5 h12.4 v7.8 h-2.3 l-1.7 3 h-4.4 l-1.7 -3 h-2.3 z" fill="#0b8a0d" stroke="#1a1a1a" stroke-width="0.5"/><rect x="878.5" y="956.0" width="6.8" height="2.4" fill="#d3d3c2"/><path d="M900.5 955.5 h12.4 v7.8 h-2.3 l-1.7 3 h-4.4 l-1.7 -3 h-2.3 z" fill="#0b8a0d" stroke="#1a1a1a" stroke-width="0.5"/><rect x="903.3" y="956.0" width="6.8" height="2.4" fill="#d3d3c2"/><path d="M925.4 955.5 h12.4 v7.8 h-2.3 l-1.7 3 h-4.4 l-1.7 -3 h-2.3 z" fill="#0b8a0d" stroke="#1a1a1a" stroke-width="0.5"/><rect x="928.2" y="956.0" width="6.8" height="2.4" fill="#d3d3c2"/><path d="M950.3 955.5 h12.4 v7.8 h-2.3 l-1.7 3 h-4.4 l-1.7 -3 h-2.3 z" fill="#0b8a0d" stroke="#1a1a1a" stroke-width="0.5"/><rect x="953.1" y="956.0" width="6.8" height="2.4" fill="#d3d3c2"/><path d="M975.1 955.5 h12.4 v7.8 h-2.3 l-1.7 3 h-4.4 l-1.7 -3 h-2.3 z" fill="#1f4297" stroke="#1a1a1a" stroke-width="0.5"/><rect x="977.9" y="956.0" width="6.8" height="2.4" fill="#d3d3c2"/><path d="M1000.0 955.5 h12.4 v7.8 h-2.3 l-1.7 3 h-4.4 l-1.7 -3 h-2.3 z" fill="#1f4297" stroke="#1a1a1a" stroke-width="0.5"/><rect x="1002.8" y="956.0" width="6.8" height="2.4" fill="#d3d3c2"/><path d="M1024.9 955.5 h12.4 v7.8 h-2.3 l-1.7 3 h-4.4 l-1.7 -3 h-2.3 z" fill="#1f4297" stroke="#1a1a1a" stroke-width="0.5"/><rect x="1027.7" y="956.0" width="6.8" height="2.4" fill="#d3d3c2"/><path d="M1049.8 955.5 h12.4 v7.8 h-2.3 l-1.7 3 h-4.4 l-1.7 -3 h-2.3 z" fill="#1f4297" stroke="#1a1a1a" stroke-width="0.5"/><rect x="1052.6" y="956.0" width="6.8" height="2.4" fill="#d3d3c2"/><path d="M1074.6 955.5 h12.4 v7.8 h-2.3 l-1.7 3 h-4.4 l-1.7 -3 h-2.3 z" fill="#1f4297" stroke="#1a1a1a" stroke-width="0.5"/><rect x="1077.4" y="956.0" width="6.8" height="2.4" fill="#d3d3c2"/><path d="M1099.5 955.5 h12.4 v7.8 h-2.3 l-1.7 3 h-4.4 l-1.7 -3 h-2.3 z" fill="#1f4297" stroke="#1a1a1a" stroke-width="0.5"/><rect x="1102.3" y="956.0" width="6.8" height="2.4" fill="#d3d3c2"/><path d="M1124.4 955.5 h12.4 v7.8 h-2.3 l-1.7 3 h-4.4 l-1.7 -3 h-2.3 z" fill="#1f4297" stroke="#1a1a1a" stroke-width="0.5"/><rect x="1127.2" y="956.0" width="6.8" height="2.4" fill="#d3d3c2"/><path d="M1149.2 955.5 h12.4 v7.8 h-2.3 l-1.7 3 h-4.4 l-1.7 -3 h-2.3 z" fill="#1f4297" stroke="#1a1a1a" stroke-width="0.5"/><rect x="1152.0" y="956.0" width="6.8" height="2.4" fill="#d3d3c2"/><path d="M1174.1 955.5 h12.4 v7.8 h-2.3 l-1.7 3 h-4.4 l-1.7 -3 h-2.3 z" fill="#1f4297" stroke="#1a1a1a" stroke-width="0.5"/><rect x="1176.9" y="956.0" width="6.8" height="2.4" fill="#d3d3c2"/><path d="M1199.0 955.5 h12.4 v7.8 h-2.3 l-1.7 3 h-4.4 l-1.7 -3 h-2.3 z" fill="#1f4297" stroke="#1a1a1a" stroke-width="0.5"/><rect x="1201.8" y="956.0" width="6.8" height="2.4" fill="#d3d3c2"/></svg>
<div class="t" style="left:1148.0px;top:227.7px;font-size:11.8px;color:#1a1a1a;transform-origin:0 50%;transform:scaleX(1.045);">Console 1</div>
<div class="t" style="left:1212.3px;top:227.7px;font-size:11.8px;color:#1a1a1a;transform-origin:0 50%;transform:scaleX(0.968);">USB 1</div>
<div class="a" style="left:1175.5px;top:239.9px;width:3.5px;height:1.3px;background:#8890b0;"></div>
<div class="a" style="left:1223.0px;top:240.4px;width:14.6px;height:6.2px;background:#1c3a8a;border-radius:1px;"></div>
<div class="a" style="left:1225.6px;top:242.5px;width:9.4px;height:2.1px;background:#8a96c4;"></div>
<div class="t" style="left:1162.4px;top:249.9px;font-size:11.5px;color:#1a1a1a;transform-origin:0 50%;transform:scaleX(0.970);">49</div>
<div class="t" style="left:1184.8px;top:249.9px;font-size:11.5px;color:#1a1a1a;transform-origin:0 50%;transform:scaleX(0.970);">50</div>
<div class="a" style="left:1156.6px;top:258.8px;width:21.4px;height:13.2px;background:#ebebee;border:1px solid #d0d0d8;box-sizing:border-box;"></div>
<div class="a" style="left:1178.4px;top:258.8px;width:21.4px;height:13.2px;background:#ebebee;border:1px solid #d0d0d8;box-sizing:border-box;"></div>
<div class="a" style="left:1200.2px;top:258.8px;width:21.4px;height:13.2px;background:#ebebee;border:1px solid #d0d0d8;box-sizing:border-box;"></div>
<div class="a" style="left:1222.0px;top:258.8px;width:21.4px;height:13.2px;background:#ebebee;border:1px solid #d0d0d8;box-sizing:border-box;"></div>
<svg style="left:1162.6px;top:262.8px;" width="12" height="10" viewBox="0 0 12 10"><rect x="0.3" y="3.2" width="5" height="5.6" fill="#5d6b5d" stroke="#333" stroke-width="0.4"/><circle cx="2.8" cy="2.4" r="2.1" fill="#2d9a34"/><rect x="6.3" y="3.2" width="5" height="5.6" fill="#5d6b5d" stroke="#333" stroke-width="0.4"/><circle cx="8.8" cy="2.4" r="2.1" fill="#2d9a34"/></svg>
<svg style="left:1185.0px;top:262.8px;" width="12" height="10" viewBox="0 0 12 10"><rect x="0.3" y="3.2" width="5" height="5.6" fill="#5d6b5d" stroke="#333" stroke-width="0.4"/><circle cx="2.8" cy="2.4" r="2.1" fill="#2d9a34"/><rect x="6.3" y="3.2" width="5" height="5.6" fill="#5d6b5d" stroke="#333" stroke-width="0.4"/><circle cx="8.8" cy="2.4" r="2.1" fill="#2d9a34"/></svg>
<div class="a" style="left:583.4px;top:216.7px;width:104px;height:16px;background:rgba(255,150,150,0.23);transform-origin:0 50%;transform:rotate(-38.4deg);"><div class="t" style="left:2.8px;top:1.6px;font-size:12.5px;color:#151515;transform-origin:0 50%;transform:scaleX(1.021)">101 - VLAN BIO</div></div>
<div class="a" style="left:606.0px;top:216.7px;width:104px;height:16px;background:rgba(255,150,150,0.23);transform-origin:0 50%;transform:rotate(-38.4deg);"><div class="t" style="left:2.8px;top:1.6px;font-size:12.5px;color:#151515;transform-origin:0 50%;transform:scaleX(1.021)">101 - VLAN BIO</div></div>
<div class="a" style="left:628.6px;top:216.7px;width:104px;height:16px;background:rgba(255,150,150,0.23);transform-origin:0 50%;transform:rotate(-38.4deg);"><div class="t" style="left:2.8px;top:1.6px;font-size:12.5px;color:#151515;transform-origin:0 50%;transform:scaleX(1.021)">101 - VLAN BIO</div></div>
<div class="a" style="left:651.2px;top:216.7px;width:104px;height:16px;background:rgba(255,150,150,0.23);transform-origin:0 50%;transform:rotate(-38.4deg);"><div class="t" style="left:2.8px;top:1.6px;font-size:12.5px;color:#151515;transform-origin:0 50%;transform:scaleX(1.021)">101 - VLAN BIO</div></div>
<div class="a" style="left:673.8px;top:216.7px;width:104px;height:16px;background:rgba(255,150,150,0.23);transform-origin:0 50%;transform:rotate(-38.4deg);"><div class="t" style="left:2.8px;top:1.6px;font-size:12.5px;color:#151515;transform-origin:0 50%;transform:scaleX(1.021)">101 - VLAN BIO</div></div>
<div class="a" style="left:696.4px;top:216.7px;width:104px;height:16px;background:rgba(255,150,150,0.23);transform-origin:0 50%;transform:rotate(-38.4deg);"><div class="t" style="left:2.8px;top:1.6px;font-size:12.5px;color:#151515;transform-origin:0 50%;transform:scaleX(1.021)">101 - VLAN BIO</div></div>
<div class="a" style="left:725.8px;top:216.7px;width:104px;height:16px;background:rgba(255,150,150,0.23);transform-origin:0 50%;transform:rotate(-38.4deg);"><div class="t" style="left:2.8px;top:1.6px;font-size:12.5px;color:#151515;transform-origin:0 50%;transform:scaleX(1.021)">101 - VLAN BIO</div></div>
<div class="a" style="left:748.4px;top:216.7px;width:104px;height:16px;background:rgba(255,150,150,0.23);transform-origin:0 50%;transform:rotate(-38.4deg);"><div class="t" style="left:2.8px;top:1.6px;font-size:12.5px;color:#151515;transform-origin:0 50%;transform:scaleX(1.021)">101 - VLAN BIO</div></div>
<div class="a" style="left:771.0px;top:216.7px;width:104px;height:16px;background:rgba(255,150,150,0.23);transform-origin:0 50%;transform:rotate(-38.4deg);"><div class="t" style="left:2.8px;top:1.6px;font-size:12.5px;color:#151515;transform-origin:0 50%;transform:scaleX(1.021)">101 - VLAN BIO</div></div>
<div class="a" style="left:793.6px;top:216.7px;width:104px;height:16px;background:rgba(255,150,150,0.23);transform-origin:0 50%;transform:rotate(-38.4deg);"><div class="t" style="left:2.8px;top:1.6px;font-size:12.5px;color:#151515;transform-origin:0 50%;transform:scaleX(1.021)">101 - VLAN BIO</div></div>
<div class="a" style="left:816.2px;top:216.7px;width:104px;height:16px;background:rgba(255,150,150,0.23);transform-origin:0 50%;transform:rotate(-38.4deg);"><div class="t" style="left:2.8px;top:1.6px;font-size:12.5px;color:#151515;transform-origin:0 50%;transform:scaleX(1.021)">101 - VLAN BIO</div></div>
<div class="a" style="left:838.8px;top:216.7px;width:104px;height:16px;background:rgba(255,150,150,0.23);transform-origin:0 50%;transform:rotate(-38.4deg);"><div class="t" style="left:2.8px;top:1.6px;font-size:12.5px;color:#151515;transform-origin:0 50%;transform:scaleX(1.021)">101 - VLAN BIO</div></div>
<div class="a" style="left:726.5px;top:393.6px;width:104px;height:16px;background:rgba(255,150,150,0.23);transform-origin:0 50%;transform:rotate(-38.4deg);"><div class="t" style="left:2.8px;top:1.6px;font-size:12.5px;color:#151515;transform-origin:0 50%;transform:scaleX(1.021)">101 - VLAN BIO</div></div>
<svg style="left:0;top:0" width="1960" height="1089"><polygon points="881,216.4 886.5,225.1 895.9,230.6 885.6,241.2 873.7,238 870.9,226.9" fill="#0b8a0d"/></svg>
</div></div>
<div class="a" style="left:460.0px;top:984.2px;width:1393.0px;height:7.4px;background:#b9b9b9;"></div>
<div class="a" style="left:1473.0px;top:213.1px;width:85.8px;height:23.9px;background:#a9d6a9;border-radius:4px;"></div>
<div class="t" style="left:1493.0px;top:218.8px;font-size:13.5px;color:#1c1c1c;transform-origin:0 50%;transform:scaleX(0.962);">Operation</div>
<div class="a" style="left:1563.0px;top:213.1px;width:86.2px;height:23.9px;background:#f8e5e9;border-radius:4px;"></div>
<div class="t" style="left:1567.5px;top:218.8px;font-size:13.5px;color:#1c1c1c;transform-origin:0 50%;transform:scaleX(0.860);">IOS XE 17.1</div>
<svg style="left:0;top:0" width="1960" height="1089"><polygon points="1303.5,224.1 1310.7,213.7 1509.4,213.7 1506.3,224.1 1509.4,234.5 1310.7,234.5" fill="#0f8a13"/></svg>
<div class="t" style="left:1315.5px;top:218.0px;font-size:12.5px;color:#fff;transform-origin:0 50%;">WO-20221005-1 Set up printer</div>
<div class="t" style="left:1400.2px;top:240.4px;font-size:16.4px;color:#6a6a6a;transform-origin:0 50%;transform:scaleX(1.011);">Layer 2 Access Switch / LAN Floor Distributor</div>
<svg style="left:0;top:0" width="1960" height="1089"><polygon points="1303.5,434.0 1310.7,423.6 1509.4,423.6 1506.3,434.0 1509.4,444.4 1310.7,444.4" fill="#0f8a13"/></svg>
<div class="t" style="left:1315.5px;top:427.9px;font-size:12.5px;color:#fff;transform-origin:0 50%;">WO-20221005-1 Set up printer</div>
<div class="t" style="left:1400.2px;top:450.2px;font-size:16.4px;color:#6a6a6a;transform-origin:0 50%;transform:scaleX(1.054);">Data Outlet / Horizontal Cabling</div>
<div class="t" style="left:1400.2px;top:496.1px;font-size:16.4px;color:#111;transform-origin:0 50%;transform:scaleX(0.984);">PP-BIO-32</div>
<div class="t" style="left:1400.2px;top:520.0px;font-size:16.4px;color:#6a6a6a;transform-origin:0 50%;transform:scaleX(1.054);">Data Outlet / Horizontal Cabling</div>
<div class="t" style="left:1400.2px;top:636.0px;font-size:16.4px;color:#111;transform-origin:0 50%;transform:scaleX(0.984);">PP-BIO-30</div>
<div class="t" style="left:1400.2px;top:660.0px;font-size:16.4px;color:#6a6a6a;transform-origin:0 50%;transform:scaleX(1.051);">Telephone Outlet / Horizontal Cabling</div>
<div class="t" style="left:1400.2px;top:705.6px;font-size:16.4px;color:#111;transform-origin:0 50%;transform:scaleX(0.984);">PP-BIO-29</div>
<div class="t" style="left:1400.2px;top:730.1px;font-size:16.4px;color:#6a6a6a;transform-origin:0 50%;transform:scaleX(1.051);">Telephone Outlet / Horizontal Cabling</div>
<div class="t" style="left:1400.2px;top:916.2px;font-size:16.4px;color:#111;transform-origin:0 50%;transform:scaleX(0.984);">PP-BIO-26</div>
<div class="a" style="left:1485.5px;top:912.8px;width:95.0px;height:24.0px;background:#e6e6fb;border-radius:4px;"></div>
<div class="t" style="left:1490.0px;top:918.5px;font-size:13px;color:#1c1c1c;transform-origin:0 50%;transform:scaleX(0.976);">» Data Center</div>
<div class="t" style="left:1400.2px;top:940.1px;font-size:16.4px;color:#6a6a6a;transform-origin:0 50%;transform:scaleX(1.026);">Main Distribution Area DC | Connection Bay 1</div>
<div class="a" style="left:1900.4px;top:237.0px;width:7.8px;height:231.0px;background:#b6b6b6;"></div>
<svg style="left:0;top:0" width="1960" height="1089"><circle cx="1871.1" cy="850.3" r="10.2" fill="none" stroke="#b2b2b2" stroke-width="3.6"/><path d="M1865.2 850.3 H1877 M1871.1 844.4 V856.2" stroke="#b2b2b2" stroke-width="1.6" fill="none"/><path d="M1880.2 859.9 L1887 865.9" stroke="#b2b2b2" stroke-width="3.4" fill="none"/></svg>
<svg style="left:0;top:0" width="1960" height="1089"><circle cx="1871.1" cy="885.1" r="10.2" fill="none" stroke="#b2b2b2" stroke-width="3.6"/><path d="M1865.2 885.1 H1877 " stroke="#b2b2b2" stroke-width="1.6" fill="none"/><path d="M1880.2 894.7 L1887 900.7" stroke="#b2b2b2" stroke-width="3.4" fill="none"/></svg>
<svg style="left:0;top:0" width="1960" height="1089"><path d="M1863 920.5 V912.3 H1871 M1877 912.3 H1885 V920.5 M1885 925.5 V933.7 H1877 M1871 933.7 H1863 V925.5" fill="none" stroke="#b2b2b2" stroke-width="2"/><path d="M1863 948 H1884.3 V968.5 H1863 Z" fill="none" stroke="#b2b2b2" stroke-width="1.5"/><g fill="#fff" stroke="#b2b2b2" stroke-width="1.3"><rect x="1860.9" y="945.7" width="4.4" height="4.4"/><rect x="1882" y="945.7" width="4.4" height="4.4"/><rect x="1860.9" y="966.3" width="4.4" height="4.4"/><rect x="1882" y="966.3" width="4.4" height="4.4"/></g></svg>
<div class="t" style="left:1868.6px;top:950.5px;font-size:15.5px;color:#b2b2b2;transform-origin:0 50%;">A</div>
<div class="a" style="left:44.0px;top:999.8px;width:1872.0px;height:41.8px;background:#333333;"></div>
<div class="t" style="left:1370.8px;top:1005.2px;font-size:30px;color:#b4b4b4;transform-origin:0 50%;transform:scaleX(0.780);">[</div>
<div class="t" style="left:1499.2px;top:1005.2px;font-size:30px;color:#b4b4b4;transform-origin:0 50%;transform:scaleX(0.780);">]</div>
<svg style="left:0;top:0" width="1960" height="1089"><path d="M1396.5 1016.4 H1387.1 V1034.1 H1416.3 V1016.4 H1407" fill="none" stroke="#b4b4b4" stroke-width="1.3"/><path d="M1401.7 1007.9 V1026.4 M1393.7 1019.6 L1401.7 1027 L1409.6 1019.6" fill="none" stroke="#b4b4b4" stroke-width="1.3"/></svg>
<div class="t" style="left:1425.5px;top:1015.1px;font-size:14px;color:#b4b4b4;transform-origin:0 50%;transform:scaleX(0.964);">Drop here</div>
<div class="t" style="left:1524.7px;top:1007.2px;font-size:10.6px;color:#b4b4b4;transform-origin:0 50%;transform:scaleX(1.060);">Licensed: tripunkt GmbH (Christin)</div>
<div class="t" style="left:1524.7px;top:1025.9px;font-size:10.6px;color:#b4b4b4;transform-origin:0 50%;transform:scaleX(1.061);">Database: localhost\pathfinder_en [SQLite]</div>
<div class="t" style="left:1758.2px;top:1007.2px;font-size:10.6px;color:#b4b4b4;transform-origin:0 50%;transform:scaleX(1.070);">© 2001-2023 tripunkt GmbH</div>
<div class="t" style="left:1758.2px;top:1025.9px;font-size:10.6px;color:#b4b4b4;transform-origin:0 50%;transform:scaleX(0.978);">v3.9.0.376 (64 Bit)</div>
<div class="a" style="left:546.6px;top:238.7px;width:247.2px;height:629.1px;background:#fff;border:1px solid #dcdcdc;box-sizing:border-box;box-shadow:2px 2px 4px rgba(0,0,0,0.35);"></div>
<div class="t" style="left:588.3px;top:248.8px;font-size:14.3px;color:#1b1b1b;transform-origin:0 50%;transform:scaleX(0.968);">Place cables...</div>
<div class="t" style="left:588.3px;top:278.9px;font-size:14.3px;color:#1b1b1b;transform-origin:0 50%;transform:scaleX(1.007);">Place cables (extended)...</div>
<div class="t" style="left:588.3px;top:309.0px;font-size:14.3px;color:#1b1b1b;transform-origin:0 50%;transform:scaleX(1.024);">Create network map...</div>
<div class="t" style="left:588.3px;top:339.1px;font-size:14.3px;color:#1b1b1b;transform-origin:0 50%;transform:scaleX(1.012);">Search network maps...</div>
<div class="a" style="left:583.3px;top:362.4px;width:202.1px;height:1.0px;background:#c8c8c8;"></div>
<div class="t" style="left:588.3px;top:372.2px;font-size:14.3px;color:#1b1b1b;transform-origin:0 50%;transform:scaleX(0.962);">Show backside</div>
<div class="t" style="left:588.3px;top:402.3px;font-size:14.3px;color:#1b1b1b;transform-origin:0 50%;transform:scaleX(0.975);">Alignment</div>
<svg style="left:779.0px;top:404.5px;" width="7" height="10" viewBox="0 0 7 10"><path d="M0.6 0.6 L5.6 5 L0.6 9.4 Z" fill="#222"/></svg>
<div class="t" style="left:588.3px;top:432.4px;font-size:14.3px;color:#1b1b1b;transform-origin:0 50%;transform:scaleX(1.031);">Move to layer</div>
<svg style="left:779.0px;top:434.6px;" width="7" height="10" viewBox="0 0 7 10"><path d="M0.6 0.6 L5.6 5 L0.6 9.4 Z" fill="#222"/></svg>
<div class="a" style="left:583.3px;top:455.7px;width:202.1px;height:1.0px;background:#c8c8c8;"></div>
<div class="t" style="left:588.3px;top:465.5px;font-size:14.3px;color:#1b1b1b;transform-origin:0 50%;transform:scaleX(1.005);">Apply naming rule...</div>
<div class="a" style="left:583.3px;top:488.8px;width:202.1px;height:1.0px;background:#c8c8c8;"></div>
<div class="t" style="left:588.3px;top:498.6px;font-size:14.3px;color:#1b1b1b;transform-origin:0 50%;">Relocate...</div>
<svg style="left:779.0px;top:500.8px;" width="7" height="10" viewBox="0 0 7 10"><path d="M0.6 0.6 L5.6 5 L0.6 9.4 Z" fill="#222"/></svg>
<div class="t" style="left:588.3px;top:528.7px;font-size:14.3px;color:#1b1b1b;transform-origin:0 50%;transform:scaleX(0.986);">Replace...</div>
<div class="t" style="left:588.3px;top:558.8px;font-size:14.3px;color:#1b1b1b;transform-origin:0 50%;transform:scaleX(1.051);">Copy...</div>
<div class="t" style="left:588.3px;top:588.9px;font-size:14.3px;color:#1b1b1b;transform-origin:0 50%;transform:scaleX(0.986);">Remove</div>
<div class="a" style="left:583.3px;top:612.2px;width:202.1px;height:1.0px;background:#c8c8c8;"></div>
<div class="t" style="left:588.3px;top:622.0px;font-size:14.3px;color:#1b1b1b;transform-origin:0 50%;transform:scaleX(1.004);">Connection overview...</div>
<div class="a" style="left:548.8px;top:644.4px;width:243.4px;height:29.9px;background:#00a7fe;"></div>
<div class="t" style="left:588.3px;top:652.1px;font-size:14.3px;color:#fff;transform-origin:0 50%;transform:scaleX(0.979);">Reports</div>
<svg style="left:779.0px;top:654.3px;" width="7" height="10" viewBox="0 0 7 10"><path d="M0.6 0.6 L5.6 5 L0.6 9.4 Z" fill="#fff"/></svg>
<div class="t" style="left:588.3px;top:682.2px;font-size:14.3px;color:#1b1b1b;transform-origin:0 50%;transform:scaleX(0.975);">Search contained</div>
<svg style="left:779.0px;top:684.4px;" width="7" height="10" viewBox="0 0 7 10"><path d="M0.6 0.6 L5.6 5 L0.6 9.4 Z" fill="#222"/></svg>
<div class="a" style="left:583.3px;top:705.5px;width:202.1px;height:1.0px;background:#c8c8c8;"></div>
<div class="t" style="left:588.3px;top:715.3px;font-size:14.3px;color:#1b1b1b;transform-origin:0 50%;transform:scaleX(0.908);">SNMP</div>
<svg style="left:779.0px;top:717.5px;" width="7" height="10" viewBox="0 0 7 10"><path d="M0.6 0.6 L5.6 5 L0.6 9.4 Z" fill="#222"/></svg>
<div class="a" style="left:583.3px;top:738.6px;width:202.1px;height:1.0px;background:#c8c8c8;"></div>
<div class="t" style="left:588.3px;top:748.4px;font-size:14.3px;color:#1b1b1b;transform-origin:0 50%;transform:scaleX(0.963);">External applications</div>
<svg style="left:779.0px;top:750.6px;" width="7" height="10" viewBox="0 0 7 10"><path d="M0.6 0.6 L5.6 5 L0.6 9.4 Z" fill="#222"/></svg>
<div class="a" style="left:583.3px;top:771.7px;width:202.1px;height:1.0px;background:#c8c8c8;"></div>
<div class="t" style="left:588.3px;top:781.5px;font-size:14.3px;color:#1b1b1b;transform-origin:0 50%;transform:scaleX(0.958);">Edit Definition</div>
<div class="a" style="left:583.3px;top:804.8px;width:202.1px;height:1.0px;background:#c8c8c8;"></div>
<div class="t" style="left:588.3px;top:814.6px;font-size:14.3px;color:#1b1b1b;transform-origin:0 50%;transform:scaleX(0.959);">Properties</div>
<div class="t" style="left:588.3px;top:844.7px;font-size:14.3px;color:#1b1b1b;transform-origin:0 50%;">Manage tags</div>
<div class="a" style="left:792.6px;top:641.6px;width:193.8px;height:217.6px;background:#fff;border:1px solid #dcdcdc;box-sizing:border-box;box-shadow:2px 2px 4px rgba(0,0,0,0.35);"></div>
<div class="t" style="left:833.6px;top:652.0px;font-size:14.3px;color:#1b1b1b;transform-origin:0 50%;transform:scaleX(0.947);">Print Labels</div>
<div class="a" style="left:828.8px;top:674.8px;width:148.8px;height:1.0px;background:#c8c8c8;"></div>
<div class="t" style="left:833.6px;top:685.0px;font-size:14.3px;color:#1b1b1b;transform-origin:0 50%;transform:scaleX(0.980);">Patch connections</div>
<div class="t" style="left:833.6px;top:715.2px;font-size:14.3px;color:#1b1b1b;transform-origin:0 50%;">Network overview</div>
<div class="t" style="left:833.6px;top:745.3px;font-size:14.3px;color:#1b1b1b;transform-origin:0 50%;transform:scaleX(0.975);">Room View</div>
<div class="t" style="left:833.6px;top:775.4px;font-size:14.3px;color:#1b1b1b;transform-origin:0 50%;transform:scaleX(1.015);">Network path</div>
<div class="t" style="left:833.6px;top:805.7px;font-size:14.3px;color:#1b1b1b;transform-origin:0 50%;transform:scaleX(0.969);">Line connections</div>
<div class="t" style="left:833.6px;top:835.8px;font-size:14.3px;color:#1b1b1b;transform-origin:0 50%;transform:scaleX(1.019);">Data outlet</div>
<div class="a" style="left:871.7px;top:720.0px;width:204.3px;height:31.7px;background:#e1edfb;mix-blend-mode:multiply;"></div>
</div></div></body></html>
